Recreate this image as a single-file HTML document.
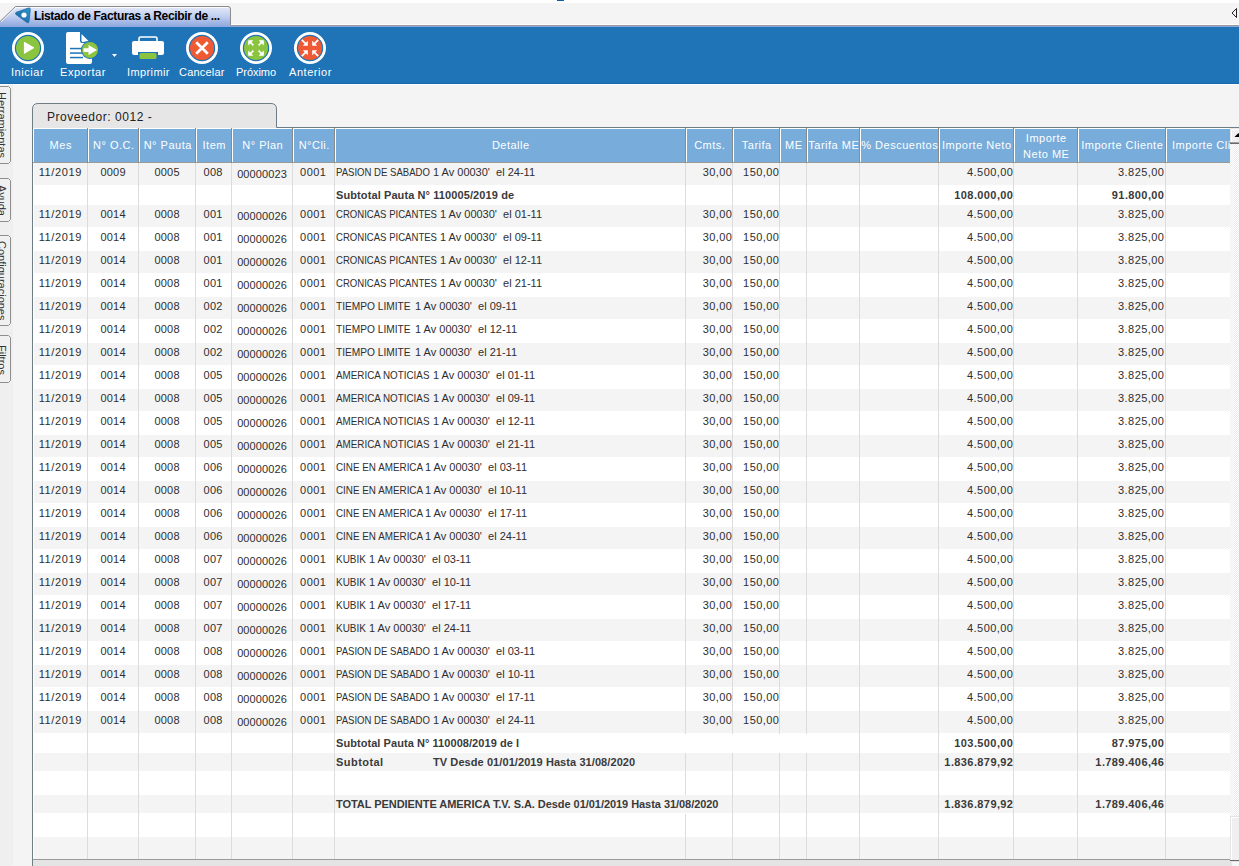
<!DOCTYPE html><html><head><meta charset="utf-8"><style>
*{margin:0;padding:0;box-sizing:border-box}
html,body{width:1239px;height:866px;overflow:hidden}
body{position:relative;background:#f4f4f4;font-family:"Liberation Sans",sans-serif;font-size:11px;color:#2e2e2e}
.a{position:absolute}
.t{position:absolute;white-space:pre;line-height:12px}
.tb{position:absolute;white-space:pre;line-height:12px;font-weight:bold;color:#3a3a3a}
.hl{position:absolute;color:#fff;white-space:pre;line-height:12px;text-align:center;letter-spacing:0.5px}
.lbl{position:absolute;color:#fff;white-space:pre;line-height:12px;font-size:11px}
</style></head><body>
<div class="a" style="left:0px;top:0px;width:1239px;height:3px;background:#ffffff;"></div>
<div class="a" style="left:557px;top:0px;width:7px;height:1px;background:#0b5bb0;"></div>
<svg class="a" style="left:0;top:0" width="1239" height="27" viewBox="0 0 1239 27">
<defs><linearGradient id="tg" x1="0" y1="0" x2="0" y2="1">
<stop offset="0" stop-color="#e3eaf8"/><stop offset="0.45" stop-color="#c3d0f0"/><stop offset="1" stop-color="#8ca6df"/></linearGradient></defs>
<rect x="0" y="24" width="1239" height="1" fill="#ffffff"/>
<rect x="0" y="25" width="1239" height="1" fill="#9a9a9a"/>
<rect x="0" y="26" width="1239" height="1" fill="#8ea7de"/>
<path d="M0 27 L0 21.5 L15.5 6.5 L228 6.5 Q230.5 6.5 230.5 9 L230.5 27 Z" fill="url(#tg)" stroke="none"/>
<path d="M0 21.5 L15.5 6.5 L228 6.5 Q230.5 6.5 230.5 9 L230.5 25" fill="none" stroke="#8c8c8c" stroke-width="1"/>
<path d="M1 22 L16 7.5 L228 7.5" fill="none" stroke="#ffffff" stroke-width="1" opacity="0.8"/>
</svg>
<svg class="a" style="left:13px;top:7px" width="20" height="18" viewBox="0 0 20 18">
<defs><linearGradient id="ig" x1="0" y1="1" x2="1" y2="0"><stop offset="0" stop-color="#1a5f9c"/><stop offset="1" stop-color="#2f97cc"/></linearGradient></defs>
<path d="M3 7.5 Q1.5 6 3.5 5.2 L15.5 1 Q17.5 0.5 17.3 2.5 L16 14.5 Q15.6 16.5 14 15.5 Z" fill="url(#ig)" stroke="#1d6aa5" stroke-width="0.8" stroke-linejoin="round"/>
<circle cx="11" cy="8" r="2.6" fill="#ffffff"/>
</svg>
<div class="tb" style="left:34px;top:10px;font-size:12px;color:#000;letter-spacing:-0.34px">Listado de Facturas a Recibir de ...</div>
<svg class="a" style="left:1229px;top:6px" width="10" height="14" viewBox="0 0 10 14">
<path d="M7.5 2.5 L3 7 L7.5 11.5 Z" fill="none" stroke="#222" stroke-width="1"/></svg>
<div class="a" style="left:0px;top:27px;width:1239px;height:56px;background:#1f73b7;"></div>
<div class="a" style="left:0px;top:83px;width:1239px;height:1px;background:#166ab0;"></div>
<div class="a" style="left:0px;top:84px;width:1239px;height:1px;background:#fbfbfb;"></div>
<svg class="a" style="left:11px;top:31px" width="34" height="34" viewBox="11 31 34 34">
<circle cx="28" cy="48" r="14.6" fill="none" stroke="#fff" stroke-width="2.8"/>
<circle cx="28" cy="48" r="12" fill="#8bc43f"/>
<path d="M24.5 42.5 L33.5 47.7 L24.5 53 Z" fill="#fff" stroke="#fff" stroke-width="1.2" stroke-linejoin="round"/>
</svg>
<svg class="a" style="left:185px;top:31px" width="34" height="34" viewBox="185 31 34 34">
<circle cx="202" cy="48" r="14.6" fill="none" stroke="#fff" stroke-width="2.8"/>
<circle cx="202" cy="48" r="12" fill="#ef5a34"/>
<path d="M196.2 42.2 L207.8 53.8 M207.8 42.2 L196.2 53.8" stroke="#fff" stroke-width="2.7" stroke-linecap="butt"/>
</svg>
<svg class="a" style="left:239px;top:31px" width="34" height="34" viewBox="239 31 34 34">
<circle cx="256" cy="48" r="14.6" fill="none" stroke="#fff" stroke-width="2.8"/>
<circle cx="256" cy="48" r="12" fill="#8bc43f"/>
<path d="M253.4 45.4 L250.2 42.2" stroke="#fff" stroke-width="1.8"/><path d="M248.2 40.2 L253.39999999999998 40.2 L248.2 45.400000000000006 Z" fill="#fff"/><path d="M258.6 45.4 L261.8 42.2" stroke="#fff" stroke-width="1.8"/><path d="M263.8 40.2 L258.6 40.2 L263.8 45.400000000000006 Z" fill="#fff"/><path d="M253.4 50.6 L250.2 53.8" stroke="#fff" stroke-width="1.8"/><path d="M248.2 55.8 L253.39999999999998 55.8 L248.2 50.599999999999994 Z" fill="#fff"/><path d="M258.6 50.6 L261.8 53.8" stroke="#fff" stroke-width="1.8"/><path d="M263.8 55.8 L258.6 55.8 L263.8 50.599999999999994 Z" fill="#fff"/>
</svg>
<svg class="a" style="left:293px;top:31px" width="34" height="34" viewBox="293 31 34 34">
<circle cx="310" cy="48" r="14.6" fill="none" stroke="#fff" stroke-width="2.8"/>
<circle cx="310" cy="48" r="12" fill="#ef5a34"/>
<path d="M301.8 39.8 L305.8 43.8" stroke="#fff" stroke-width="1.8"/><path d="M307.8 45.8 L302.8 45.8 L307.8 40.8 Z" fill="#fff"/><path d="M318.2 39.8 L314.2 43.8" stroke="#fff" stroke-width="1.8"/><path d="M312.2 45.8 L317.2 45.8 L312.2 40.8 Z" fill="#fff"/><path d="M301.8 56.2 L305.8 52.2" stroke="#fff" stroke-width="1.8"/><path d="M307.8 50.2 L302.8 50.2 L307.8 55.2 Z" fill="#fff"/><path d="M318.2 56.2 L314.2 52.2" stroke="#fff" stroke-width="1.8"/><path d="M312.2 50.2 L317.2 50.2 L312.2 55.2 Z" fill="#fff"/>
</svg>
<svg class="a" style="left:60px;top:28px" width="62" height="40" viewBox="60 28 62 40">
<path d="M68 32 L80 32 L80 41 Q80 43 82 43 L92 43 L92 62 Q92 64 90 64 L68 64 Q66 64 66 62 L66 34 Q66 32 68 32 Z" fill="#fff"/>
<path d="M81.5 34 L88.5 41 L83 42 Q81.5 42 81.5 40.5 Z" fill="#fff"/>
<rect x="70" y="47.8" width="13" height="1.5" fill="#1f73b7"/>
<rect x="70" y="52.3" width="13" height="1.5" fill="#1f73b7"/>
<rect x="70" y="56.8" width="13" height="1.5" fill="#1f73b7"/>
<circle cx="90" cy="50" r="9" fill="#1f73b7"/>
<circle cx="90" cy="50" r="8" fill="#8bc43f"/>
<path d="M83.5 48.3 L88.5 48.3 L88.5 45 L97 50 L88.5 55 L88.5 52 L83.5 52 Z" fill="#fff"/>
<path d="M112 54 L117 54 L114.5 57 Z" fill="#fff"/>
</svg>
<svg class="a" style="left:128px;top:34px" width="40" height="28" viewBox="128 34 40 28">
<path d="M139 41 L139 38.5 Q139 37 140.5 37 L155.5 37 Q157 37 157 38.5 L157 41" fill="none" stroke="#fff" stroke-width="1.6"/>
<path d="M134 41 L162 41 Q164 41 164 43 L164 53 Q164 55 162 55 L158 55 L158 52 L138 52 L138 55 L134 55 Q132 55 132 53 L132 43 Q132 41 134 41 Z" fill="#fff"/>
<path d="M141 53 L155 53 Q156.5 53 156.5 54.5 L156.5 57.5 Q156.5 59 155 59 L141 59 Q139.5 59 139.5 57.5 L139.5 54.5 Q139.5 53 141 53 Z" fill="#8bc43f"/>
</svg>
<div class="lbl" style="left:11px;top:66px;letter-spacing:0.55px">Iniciar</div>
<div class="lbl" style="left:60px;top:66px;letter-spacing:0.55px">Exportar</div>
<div class="lbl" style="left:127px;top:66px;letter-spacing:0.4px">Imprimir</div>
<div class="lbl" style="left:179px;top:66px;letter-spacing:0.2px">Cancelar</div>
<div class="lbl" style="left:236px;top:66px;letter-spacing:-0.05px">Próximo</div>
<div class="lbl" style="left:289px;top:66px;letter-spacing:0.55px">Anterior</div>
<div class="a" style="left:0px;top:85px;width:13px;height:781px;background:#efefef;"></div>
<svg class="a" style="left:0;top:86px" width="13" height="79" viewBox="0 86 13 79">
<path d="M0 86.5 L8.5 86.5 L10.5 88.5 L10.5 161.5 L8.5 163.5 L0 163.5" fill="#f0f0f0" stroke="#8e8e8e" stroke-width="1"/>
</svg>
<div class="a" style="left:-4px;top:87px;width:12px;height:77px;overflow:hidden;display:flex;align-items:center"><div style="writing-mode:vertical-rl;white-space:pre;font-size:11px;line-height:12px;color:#333">Herramientas</div></div>
<svg class="a" style="left:0;top:178px" width="13" height="45" viewBox="0 178 13 45">
<path d="M0 178.5 L8.5 178.5 L10.5 180.5 L10.5 219.5 L8.5 221.5 L0 221.5" fill="#f0f0f0" stroke="#8e8e8e" stroke-width="1"/>
</svg>
<div class="a" style="left:-4px;top:179px;width:12px;height:43px;overflow:hidden;display:flex;align-items:center"><div style="writing-mode:vertical-rl;white-space:pre;font-size:11px;line-height:12px;color:#333">Ayuda</div></div>
<svg class="a" style="left:0;top:235px" width="13" height="92" viewBox="0 235 13 92">
<path d="M0 235.5 L8.5 235.5 L10.5 237.5 L10.5 323.5 L8.5 325.5 L0 325.5" fill="#f0f0f0" stroke="#8e8e8e" stroke-width="1"/>
</svg>
<div class="a" style="left:-4px;top:236px;width:12px;height:90px;overflow:hidden;display:flex;align-items:center"><div style="writing-mode:vertical-rl;white-space:pre;font-size:11px;line-height:12px;color:#333">Configuraciones</div></div>
<svg class="a" style="left:0;top:335px" width="13" height="49" viewBox="0 335 13 49">
<path d="M0 335.5 L8.5 335.5 L10.5 337.5 L10.5 380.5 L8.5 382.5 L0 382.5" fill="#f0f0f0" stroke="#8e8e8e" stroke-width="1"/>
</svg>
<div class="a" style="left:-4px;top:336px;width:12px;height:47px;overflow:hidden;display:flex;align-items:center"><div style="writing-mode:vertical-rl;white-space:pre;font-size:11px;line-height:12px;color:#333">Filtros</div></div>
<svg class="a" style="left:0;top:96px" width="1239" height="40" viewBox="0 96 1239 40">
<path d="M32.5 136 L32.5 109 Q32.5 103.5 38 103.5 L271 103.5 Q276.5 103.5 276.5 109 L276.5 127.5 L1239 127.5" fill="#e6e6e6" stroke="#6f7d87" stroke-width="1"/>
</svg>
<div class="t" style="left:47px;top:111px;font-size:12px;color:#222;letter-spacing:0.55px">Proveedor: 0012 -</div>
<div class="a" style="left:32px;top:128px;width:1px;height:738px;background:#6f7d87;"></div>
<div class="a" style="left:33px;top:128px;width:1197px;height:1px;background:#ffffff;"></div>
<div class="a" style="left:33px;top:129px;width:1197px;height:33px;background:#78acdb;"></div>
<div class="a" style="left:33px;top:162px;width:1197px;height:1px;background:#9a9a9a;"></div>
<div class="a" style="left:33px;top:128px;width:1px;height:34px;background:#ffffff;"></div>
<div class="a" style="left:87px;top:128px;width:1px;height:35px;background:#8a8a8a;"></div>
<div class="hl" style="left:34px;top:139px;width:53.5px">Mes</div>
<div class="a" style="left:88px;top:128px;width:1px;height:34px;background:#ffffff;"></div>
<div class="a" style="left:138px;top:128px;width:1px;height:35px;background:#8a8a8a;"></div>
<div class="hl" style="left:89px;top:139px;width:49.5px">N° O.C.</div>
<div class="a" style="left:139px;top:128px;width:1px;height:34px;background:#ffffff;"></div>
<div class="a" style="left:195px;top:128px;width:1px;height:35px;background:#8a8a8a;"></div>
<div class="hl" style="left:140px;top:139px;width:55.5px">N° Pauta</div>
<div class="a" style="left:196px;top:128px;width:1px;height:34px;background:#ffffff;"></div>
<div class="a" style="left:231px;top:128px;width:1px;height:35px;background:#8a8a8a;"></div>
<div class="hl" style="left:197px;top:139px;width:34.5px">Item</div>
<div class="a" style="left:232px;top:128px;width:1px;height:34px;background:#ffffff;"></div>
<div class="a" style="left:292px;top:128px;width:1px;height:35px;background:#8a8a8a;"></div>
<div class="hl" style="left:233px;top:139px;width:59.5px">N° Plan</div>
<div class="a" style="left:293px;top:128px;width:1px;height:34px;background:#ffffff;"></div>
<div class="a" style="left:334px;top:128px;width:1px;height:35px;background:#8a8a8a;"></div>
<div class="hl" style="left:294px;top:139px;width:40.5px">N°Cli.</div>
<div class="a" style="left:335px;top:128px;width:1px;height:34px;background:#ffffff;"></div>
<div class="a" style="left:685px;top:128px;width:1px;height:35px;background:#8a8a8a;"></div>
<div class="hl" style="left:336px;top:139px;width:349.5px">Detalle</div>
<div class="a" style="left:686px;top:128px;width:1px;height:34px;background:#ffffff;"></div>
<div class="a" style="left:732px;top:128px;width:1px;height:35px;background:#8a8a8a;"></div>
<div class="hl" style="left:687px;top:139px;width:45.5px">Cmts.</div>
<div class="a" style="left:733px;top:128px;width:1px;height:34px;background:#ffffff;"></div>
<div class="a" style="left:779px;top:128px;width:1px;height:35px;background:#8a8a8a;"></div>
<div class="hl" style="left:734px;top:139px;width:45.5px">Tarifa</div>
<div class="a" style="left:780px;top:128px;width:1px;height:34px;background:#ffffff;"></div>
<div class="a" style="left:806px;top:128px;width:1px;height:35px;background:#8a8a8a;"></div>
<div class="hl" style="left:781px;top:139px;width:25.5px">ME</div>
<div class="a" style="left:807px;top:128px;width:1px;height:34px;background:#ffffff;"></div>
<div class="a" style="left:859px;top:128px;width:1px;height:35px;background:#8a8a8a;"></div>
<div class="hl" style="left:808px;top:139px;width:51.5px">Tarifa ME</div>
<div class="a" style="left:860px;top:128px;width:1px;height:34px;background:#ffffff;"></div>
<div class="a" style="left:938px;top:128px;width:1px;height:35px;background:#8a8a8a;"></div>
<div class="hl" style="left:861px;top:139px;width:77.5px">% Descuentos</div>
<div class="a" style="left:939px;top:128px;width:1px;height:34px;background:#ffffff;"></div>
<div class="a" style="left:1013px;top:128px;width:1px;height:35px;background:#8a8a8a;"></div>
<div class="hl" style="left:940px;top:139px;width:73.5px">Importe Neto</div>
<div class="a" style="left:1014px;top:128px;width:1px;height:34px;background:#ffffff;"></div>
<div class="a" style="left:1077px;top:128px;width:1px;height:35px;background:#8a8a8a;"></div>
<div class="hl" style="left:1015px;top:132px;width:62.5px">Importe</div>
<div class="hl" style="left:1015px;top:148px;width:62.5px">Neto ME</div>
<div class="a" style="left:1078px;top:128px;width:1px;height:34px;background:#ffffff;"></div>
<div class="a" style="left:1165px;top:128px;width:1px;height:35px;background:#8a8a8a;"></div>
<div class="hl" style="left:1079px;top:139px;width:86.5px">Importe Cliente</div>
<div class="a" style="left:1166px;top:128px;width:1px;height:34px;background:#ffffff;"></div>
<div class="a" style="left:1167px;top:129px;width:63px;height:33px;overflow:hidden"><div class="hl" style="left:5px;top:10px;text-align:left">Importe Cliente</div></div>
<div class="a" style="left:33px;top:163px;width:1197px;height:696px;background:#ffffff;"></div>
<div class="a" style="left:34px;top:163px;width:1196px;height:22px;background:#f4f4f4;"></div>
<div class="a" style="left:87px;top:163px;width:1px;height:23px;background:#dcdcdc;"></div>
<div class="a" style="left:138px;top:163px;width:1px;height:23px;background:#dcdcdc;"></div>
<div class="a" style="left:195px;top:163px;width:1px;height:23px;background:#dcdcdc;"></div>
<div class="a" style="left:231px;top:163px;width:1px;height:23px;background:#dcdcdc;"></div>
<div class="a" style="left:292px;top:163px;width:1px;height:23px;background:#dcdcdc;"></div>
<div class="a" style="left:334px;top:163px;width:1px;height:23px;background:#dcdcdc;"></div>
<div class="a" style="left:685px;top:163px;width:1px;height:23px;background:#dcdcdc;"></div>
<div class="a" style="left:732px;top:163px;width:1px;height:23px;background:#dcdcdc;"></div>
<div class="a" style="left:779px;top:163px;width:1px;height:23px;background:#dcdcdc;"></div>
<div class="a" style="left:806px;top:163px;width:1px;height:23px;background:#dcdcdc;"></div>
<div class="a" style="left:859px;top:163px;width:1px;height:23px;background:#dcdcdc;"></div>
<div class="a" style="left:938px;top:163px;width:1px;height:23px;background:#dcdcdc;"></div>
<div class="a" style="left:1013px;top:163px;width:1px;height:23px;background:#dcdcdc;"></div>
<div class="a" style="left:1077px;top:163px;width:1px;height:23px;background:#dcdcdc;"></div>
<div class="a" style="left:1165px;top:163px;width:1px;height:23px;background:#dcdcdc;"></div>
<div class="t" style="left:33px;top:166px;width:54.6px;text-align:center;letter-spacing:0.6px">11/2019</div>
<div class="t" style="left:88px;top:166px;width:50.2px;text-align:center;letter-spacing:0.2px">0009</div>
<div class="t" style="left:139px;top:166px;width:56.2px;text-align:center;letter-spacing:0.2px">0005</div>
<div class="t" style="left:195.5px;top:166px;width:35.2px;text-align:center;letter-spacing:0.2px">008</div>
<div class="t" style="left:232px;top:168px;width:60px;text-align:center;font-size:11px;letter-spacing:0.1px">00000023</div>
<div class="t" style="left:292.5px;top:166px;width:41.45px;text-align:center;letter-spacing:0.45px">0001</div>
<div class="t" style="left:336px;top:166px;transform:scaleX(0.8691588785046729);transform-origin:0 0">PASION DE SABADO</div>
<div class="t" style="left:433px;top:166px">1 Av 00030'  el 24-11</div>
<div class="t" style="left:686px;top:166px;width:46.45px;text-align:right;letter-spacing:0.45px">30,00</div>
<div class="t" style="left:733px;top:166px;width:46.45px;text-align:right;letter-spacing:0.45px">150,00</div>
<div class="t" style="left:939px;top:166px;width:74.45px;text-align:right;letter-spacing:0.45px">4.500,00</div>
<div class="t" style="left:1077px;top:166px;width:87.45px;text-align:right;letter-spacing:0.45px">3.825,00</div>
<div class="a" style="left:87px;top:186px;width:1px;height:19px;background:#dcdcdc;"></div>
<div class="a" style="left:138px;top:186px;width:1px;height:19px;background:#dcdcdc;"></div>
<div class="a" style="left:195px;top:186px;width:1px;height:19px;background:#dcdcdc;"></div>
<div class="a" style="left:231px;top:186px;width:1px;height:19px;background:#dcdcdc;"></div>
<div class="a" style="left:292px;top:186px;width:1px;height:19px;background:#dcdcdc;"></div>
<div class="a" style="left:334px;top:186px;width:1px;height:19px;background:#dcdcdc;"></div>
<div class="a" style="left:685px;top:186px;width:1px;height:19px;background:#dcdcdc;"></div>
<div class="a" style="left:732px;top:186px;width:1px;height:19px;background:#dcdcdc;"></div>
<div class="a" style="left:779px;top:186px;width:1px;height:19px;background:#dcdcdc;"></div>
<div class="a" style="left:806px;top:186px;width:1px;height:19px;background:#dcdcdc;"></div>
<div class="a" style="left:859px;top:186px;width:1px;height:19px;background:#dcdcdc;"></div>
<div class="a" style="left:938px;top:186px;width:1px;height:19px;background:#dcdcdc;"></div>
<div class="a" style="left:1013px;top:186px;width:1px;height:19px;background:#dcdcdc;"></div>
<div class="a" style="left:1077px;top:186px;width:1px;height:19px;background:#dcdcdc;"></div>
<div class="a" style="left:1165px;top:186px;width:1px;height:19px;background:#dcdcdc;"></div>
<div class="tb" style="left:336px;top:189px;letter-spacing:0.1px">Subtotal Pauta N° 110005/2019 de</div>
<div class="tb" style="left:939px;top:189px;width:74.4px;text-align:right;letter-spacing:0.4px">108.000,00</div>
<div class="tb" style="left:1077px;top:189px;width:87.4px;text-align:right;letter-spacing:0.4px">91.800,00</div>
<div class="a" style="left:34px;top:205px;width:1196px;height:22px;background:#f4f4f4;"></div>
<div class="a" style="left:87px;top:205px;width:1px;height:23px;background:#dcdcdc;"></div>
<div class="a" style="left:138px;top:205px;width:1px;height:23px;background:#dcdcdc;"></div>
<div class="a" style="left:195px;top:205px;width:1px;height:23px;background:#dcdcdc;"></div>
<div class="a" style="left:231px;top:205px;width:1px;height:23px;background:#dcdcdc;"></div>
<div class="a" style="left:292px;top:205px;width:1px;height:23px;background:#dcdcdc;"></div>
<div class="a" style="left:334px;top:205px;width:1px;height:23px;background:#dcdcdc;"></div>
<div class="a" style="left:685px;top:205px;width:1px;height:23px;background:#dcdcdc;"></div>
<div class="a" style="left:732px;top:205px;width:1px;height:23px;background:#dcdcdc;"></div>
<div class="a" style="left:779px;top:205px;width:1px;height:23px;background:#dcdcdc;"></div>
<div class="a" style="left:806px;top:205px;width:1px;height:23px;background:#dcdcdc;"></div>
<div class="a" style="left:859px;top:205px;width:1px;height:23px;background:#dcdcdc;"></div>
<div class="a" style="left:938px;top:205px;width:1px;height:23px;background:#dcdcdc;"></div>
<div class="a" style="left:1013px;top:205px;width:1px;height:23px;background:#dcdcdc;"></div>
<div class="a" style="left:1077px;top:205px;width:1px;height:23px;background:#dcdcdc;"></div>
<div class="a" style="left:1165px;top:205px;width:1px;height:23px;background:#dcdcdc;"></div>
<div class="t" style="left:33px;top:208px;width:54.6px;text-align:center;letter-spacing:0.6px">11/2019</div>
<div class="t" style="left:88px;top:208px;width:50.2px;text-align:center;letter-spacing:0.2px">0014</div>
<div class="t" style="left:139px;top:208px;width:56.2px;text-align:center;letter-spacing:0.2px">0008</div>
<div class="t" style="left:195.5px;top:208px;width:35.2px;text-align:center;letter-spacing:0.2px">001</div>
<div class="t" style="left:232px;top:210px;width:60px;text-align:center;font-size:11px;letter-spacing:0.1px">00000026</div>
<div class="t" style="left:292.5px;top:208px;width:41.45px;text-align:center;letter-spacing:0.45px">0001</div>
<div class="t" style="left:336px;top:208px;transform:scaleX(0.8695652173913043);transform-origin:0 0">CRONICAS PICANTES</div>
<div class="t" style="left:440px;top:208px">1 Av 00030'  el 01-11</div>
<div class="t" style="left:686px;top:208px;width:46.45px;text-align:right;letter-spacing:0.45px">30,00</div>
<div class="t" style="left:733px;top:208px;width:46.45px;text-align:right;letter-spacing:0.45px">150,00</div>
<div class="t" style="left:939px;top:208px;width:74.45px;text-align:right;letter-spacing:0.45px">4.500,00</div>
<div class="t" style="left:1077px;top:208px;width:87.45px;text-align:right;letter-spacing:0.45px">3.825,00</div>
<div class="a" style="left:87px;top:228px;width:1px;height:23px;background:#dcdcdc;"></div>
<div class="a" style="left:138px;top:228px;width:1px;height:23px;background:#dcdcdc;"></div>
<div class="a" style="left:195px;top:228px;width:1px;height:23px;background:#dcdcdc;"></div>
<div class="a" style="left:231px;top:228px;width:1px;height:23px;background:#dcdcdc;"></div>
<div class="a" style="left:292px;top:228px;width:1px;height:23px;background:#dcdcdc;"></div>
<div class="a" style="left:334px;top:228px;width:1px;height:23px;background:#dcdcdc;"></div>
<div class="a" style="left:685px;top:228px;width:1px;height:23px;background:#dcdcdc;"></div>
<div class="a" style="left:732px;top:228px;width:1px;height:23px;background:#dcdcdc;"></div>
<div class="a" style="left:779px;top:228px;width:1px;height:23px;background:#dcdcdc;"></div>
<div class="a" style="left:806px;top:228px;width:1px;height:23px;background:#dcdcdc;"></div>
<div class="a" style="left:859px;top:228px;width:1px;height:23px;background:#dcdcdc;"></div>
<div class="a" style="left:938px;top:228px;width:1px;height:23px;background:#dcdcdc;"></div>
<div class="a" style="left:1013px;top:228px;width:1px;height:23px;background:#dcdcdc;"></div>
<div class="a" style="left:1077px;top:228px;width:1px;height:23px;background:#dcdcdc;"></div>
<div class="a" style="left:1165px;top:228px;width:1px;height:23px;background:#dcdcdc;"></div>
<div class="t" style="left:33px;top:231px;width:54.6px;text-align:center;letter-spacing:0.6px">11/2019</div>
<div class="t" style="left:88px;top:231px;width:50.2px;text-align:center;letter-spacing:0.2px">0014</div>
<div class="t" style="left:139px;top:231px;width:56.2px;text-align:center;letter-spacing:0.2px">0008</div>
<div class="t" style="left:195.5px;top:231px;width:35.2px;text-align:center;letter-spacing:0.2px">001</div>
<div class="t" style="left:232px;top:233px;width:60px;text-align:center;font-size:11px;letter-spacing:0.1px">00000026</div>
<div class="t" style="left:292.5px;top:231px;width:41.45px;text-align:center;letter-spacing:0.45px">0001</div>
<div class="t" style="left:336px;top:231px;transform:scaleX(0.8695652173913043);transform-origin:0 0">CRONICAS PICANTES</div>
<div class="t" style="left:440px;top:231px">1 Av 00030'  el 09-11</div>
<div class="t" style="left:686px;top:231px;width:46.45px;text-align:right;letter-spacing:0.45px">30,00</div>
<div class="t" style="left:733px;top:231px;width:46.45px;text-align:right;letter-spacing:0.45px">150,00</div>
<div class="t" style="left:939px;top:231px;width:74.45px;text-align:right;letter-spacing:0.45px">4.500,00</div>
<div class="t" style="left:1077px;top:231px;width:87.45px;text-align:right;letter-spacing:0.45px">3.825,00</div>
<div class="a" style="left:34px;top:251px;width:1196px;height:22px;background:#f4f4f4;"></div>
<div class="a" style="left:87px;top:251px;width:1px;height:23px;background:#dcdcdc;"></div>
<div class="a" style="left:138px;top:251px;width:1px;height:23px;background:#dcdcdc;"></div>
<div class="a" style="left:195px;top:251px;width:1px;height:23px;background:#dcdcdc;"></div>
<div class="a" style="left:231px;top:251px;width:1px;height:23px;background:#dcdcdc;"></div>
<div class="a" style="left:292px;top:251px;width:1px;height:23px;background:#dcdcdc;"></div>
<div class="a" style="left:334px;top:251px;width:1px;height:23px;background:#dcdcdc;"></div>
<div class="a" style="left:685px;top:251px;width:1px;height:23px;background:#dcdcdc;"></div>
<div class="a" style="left:732px;top:251px;width:1px;height:23px;background:#dcdcdc;"></div>
<div class="a" style="left:779px;top:251px;width:1px;height:23px;background:#dcdcdc;"></div>
<div class="a" style="left:806px;top:251px;width:1px;height:23px;background:#dcdcdc;"></div>
<div class="a" style="left:859px;top:251px;width:1px;height:23px;background:#dcdcdc;"></div>
<div class="a" style="left:938px;top:251px;width:1px;height:23px;background:#dcdcdc;"></div>
<div class="a" style="left:1013px;top:251px;width:1px;height:23px;background:#dcdcdc;"></div>
<div class="a" style="left:1077px;top:251px;width:1px;height:23px;background:#dcdcdc;"></div>
<div class="a" style="left:1165px;top:251px;width:1px;height:23px;background:#dcdcdc;"></div>
<div class="t" style="left:33px;top:254px;width:54.6px;text-align:center;letter-spacing:0.6px">11/2019</div>
<div class="t" style="left:88px;top:254px;width:50.2px;text-align:center;letter-spacing:0.2px">0014</div>
<div class="t" style="left:139px;top:254px;width:56.2px;text-align:center;letter-spacing:0.2px">0008</div>
<div class="t" style="left:195.5px;top:254px;width:35.2px;text-align:center;letter-spacing:0.2px">001</div>
<div class="t" style="left:232px;top:256px;width:60px;text-align:center;font-size:11px;letter-spacing:0.1px">00000026</div>
<div class="t" style="left:292.5px;top:254px;width:41.45px;text-align:center;letter-spacing:0.45px">0001</div>
<div class="t" style="left:336px;top:254px;transform:scaleX(0.8695652173913043);transform-origin:0 0">CRONICAS PICANTES</div>
<div class="t" style="left:440px;top:254px">1 Av 00030'  el 12-11</div>
<div class="t" style="left:686px;top:254px;width:46.45px;text-align:right;letter-spacing:0.45px">30,00</div>
<div class="t" style="left:733px;top:254px;width:46.45px;text-align:right;letter-spacing:0.45px">150,00</div>
<div class="t" style="left:939px;top:254px;width:74.45px;text-align:right;letter-spacing:0.45px">4.500,00</div>
<div class="t" style="left:1077px;top:254px;width:87.45px;text-align:right;letter-spacing:0.45px">3.825,00</div>
<div class="a" style="left:87px;top:274px;width:1px;height:23px;background:#dcdcdc;"></div>
<div class="a" style="left:138px;top:274px;width:1px;height:23px;background:#dcdcdc;"></div>
<div class="a" style="left:195px;top:274px;width:1px;height:23px;background:#dcdcdc;"></div>
<div class="a" style="left:231px;top:274px;width:1px;height:23px;background:#dcdcdc;"></div>
<div class="a" style="left:292px;top:274px;width:1px;height:23px;background:#dcdcdc;"></div>
<div class="a" style="left:334px;top:274px;width:1px;height:23px;background:#dcdcdc;"></div>
<div class="a" style="left:685px;top:274px;width:1px;height:23px;background:#dcdcdc;"></div>
<div class="a" style="left:732px;top:274px;width:1px;height:23px;background:#dcdcdc;"></div>
<div class="a" style="left:779px;top:274px;width:1px;height:23px;background:#dcdcdc;"></div>
<div class="a" style="left:806px;top:274px;width:1px;height:23px;background:#dcdcdc;"></div>
<div class="a" style="left:859px;top:274px;width:1px;height:23px;background:#dcdcdc;"></div>
<div class="a" style="left:938px;top:274px;width:1px;height:23px;background:#dcdcdc;"></div>
<div class="a" style="left:1013px;top:274px;width:1px;height:23px;background:#dcdcdc;"></div>
<div class="a" style="left:1077px;top:274px;width:1px;height:23px;background:#dcdcdc;"></div>
<div class="a" style="left:1165px;top:274px;width:1px;height:23px;background:#dcdcdc;"></div>
<div class="t" style="left:33px;top:277px;width:54.6px;text-align:center;letter-spacing:0.6px">11/2019</div>
<div class="t" style="left:88px;top:277px;width:50.2px;text-align:center;letter-spacing:0.2px">0014</div>
<div class="t" style="left:139px;top:277px;width:56.2px;text-align:center;letter-spacing:0.2px">0008</div>
<div class="t" style="left:195.5px;top:277px;width:35.2px;text-align:center;letter-spacing:0.2px">001</div>
<div class="t" style="left:232px;top:279px;width:60px;text-align:center;font-size:11px;letter-spacing:0.1px">00000026</div>
<div class="t" style="left:292.5px;top:277px;width:41.45px;text-align:center;letter-spacing:0.45px">0001</div>
<div class="t" style="left:336px;top:277px;transform:scaleX(0.8695652173913043);transform-origin:0 0">CRONICAS PICANTES</div>
<div class="t" style="left:440px;top:277px">1 Av 00030'  el 21-11</div>
<div class="t" style="left:686px;top:277px;width:46.45px;text-align:right;letter-spacing:0.45px">30,00</div>
<div class="t" style="left:733px;top:277px;width:46.45px;text-align:right;letter-spacing:0.45px">150,00</div>
<div class="t" style="left:939px;top:277px;width:74.45px;text-align:right;letter-spacing:0.45px">4.500,00</div>
<div class="t" style="left:1077px;top:277px;width:87.45px;text-align:right;letter-spacing:0.45px">3.825,00</div>
<div class="a" style="left:34px;top:297px;width:1196px;height:22px;background:#f4f4f4;"></div>
<div class="a" style="left:87px;top:297px;width:1px;height:23px;background:#dcdcdc;"></div>
<div class="a" style="left:138px;top:297px;width:1px;height:23px;background:#dcdcdc;"></div>
<div class="a" style="left:195px;top:297px;width:1px;height:23px;background:#dcdcdc;"></div>
<div class="a" style="left:231px;top:297px;width:1px;height:23px;background:#dcdcdc;"></div>
<div class="a" style="left:292px;top:297px;width:1px;height:23px;background:#dcdcdc;"></div>
<div class="a" style="left:334px;top:297px;width:1px;height:23px;background:#dcdcdc;"></div>
<div class="a" style="left:685px;top:297px;width:1px;height:23px;background:#dcdcdc;"></div>
<div class="a" style="left:732px;top:297px;width:1px;height:23px;background:#dcdcdc;"></div>
<div class="a" style="left:779px;top:297px;width:1px;height:23px;background:#dcdcdc;"></div>
<div class="a" style="left:806px;top:297px;width:1px;height:23px;background:#dcdcdc;"></div>
<div class="a" style="left:859px;top:297px;width:1px;height:23px;background:#dcdcdc;"></div>
<div class="a" style="left:938px;top:297px;width:1px;height:23px;background:#dcdcdc;"></div>
<div class="a" style="left:1013px;top:297px;width:1px;height:23px;background:#dcdcdc;"></div>
<div class="a" style="left:1077px;top:297px;width:1px;height:23px;background:#dcdcdc;"></div>
<div class="a" style="left:1165px;top:297px;width:1px;height:23px;background:#dcdcdc;"></div>
<div class="t" style="left:33px;top:300px;width:54.6px;text-align:center;letter-spacing:0.6px">11/2019</div>
<div class="t" style="left:88px;top:300px;width:50.2px;text-align:center;letter-spacing:0.2px">0014</div>
<div class="t" style="left:139px;top:300px;width:56.2px;text-align:center;letter-spacing:0.2px">0008</div>
<div class="t" style="left:195.5px;top:300px;width:35.2px;text-align:center;letter-spacing:0.2px">002</div>
<div class="t" style="left:232px;top:302px;width:60px;text-align:center;font-size:11px;letter-spacing:0.1px">00000026</div>
<div class="t" style="left:292.5px;top:300px;width:41.45px;text-align:center;letter-spacing:0.45px">0001</div>
<div class="t" style="left:336px;top:300px;transform:scaleX(0.925);transform-origin:0 0">TIEMPO LIMITE</div>
<div class="t" style="left:415px;top:300px">1 Av 00030'  el 09-11</div>
<div class="t" style="left:686px;top:300px;width:46.45px;text-align:right;letter-spacing:0.45px">30,00</div>
<div class="t" style="left:733px;top:300px;width:46.45px;text-align:right;letter-spacing:0.45px">150,00</div>
<div class="t" style="left:939px;top:300px;width:74.45px;text-align:right;letter-spacing:0.45px">4.500,00</div>
<div class="t" style="left:1077px;top:300px;width:87.45px;text-align:right;letter-spacing:0.45px">3.825,00</div>
<div class="a" style="left:87px;top:320px;width:1px;height:23px;background:#dcdcdc;"></div>
<div class="a" style="left:138px;top:320px;width:1px;height:23px;background:#dcdcdc;"></div>
<div class="a" style="left:195px;top:320px;width:1px;height:23px;background:#dcdcdc;"></div>
<div class="a" style="left:231px;top:320px;width:1px;height:23px;background:#dcdcdc;"></div>
<div class="a" style="left:292px;top:320px;width:1px;height:23px;background:#dcdcdc;"></div>
<div class="a" style="left:334px;top:320px;width:1px;height:23px;background:#dcdcdc;"></div>
<div class="a" style="left:685px;top:320px;width:1px;height:23px;background:#dcdcdc;"></div>
<div class="a" style="left:732px;top:320px;width:1px;height:23px;background:#dcdcdc;"></div>
<div class="a" style="left:779px;top:320px;width:1px;height:23px;background:#dcdcdc;"></div>
<div class="a" style="left:806px;top:320px;width:1px;height:23px;background:#dcdcdc;"></div>
<div class="a" style="left:859px;top:320px;width:1px;height:23px;background:#dcdcdc;"></div>
<div class="a" style="left:938px;top:320px;width:1px;height:23px;background:#dcdcdc;"></div>
<div class="a" style="left:1013px;top:320px;width:1px;height:23px;background:#dcdcdc;"></div>
<div class="a" style="left:1077px;top:320px;width:1px;height:23px;background:#dcdcdc;"></div>
<div class="a" style="left:1165px;top:320px;width:1px;height:23px;background:#dcdcdc;"></div>
<div class="t" style="left:33px;top:323px;width:54.6px;text-align:center;letter-spacing:0.6px">11/2019</div>
<div class="t" style="left:88px;top:323px;width:50.2px;text-align:center;letter-spacing:0.2px">0014</div>
<div class="t" style="left:139px;top:323px;width:56.2px;text-align:center;letter-spacing:0.2px">0008</div>
<div class="t" style="left:195.5px;top:323px;width:35.2px;text-align:center;letter-spacing:0.2px">002</div>
<div class="t" style="left:232px;top:325px;width:60px;text-align:center;font-size:11px;letter-spacing:0.1px">00000026</div>
<div class="t" style="left:292.5px;top:323px;width:41.45px;text-align:center;letter-spacing:0.45px">0001</div>
<div class="t" style="left:336px;top:323px;transform:scaleX(0.925);transform-origin:0 0">TIEMPO LIMITE</div>
<div class="t" style="left:415px;top:323px">1 Av 00030'  el 12-11</div>
<div class="t" style="left:686px;top:323px;width:46.45px;text-align:right;letter-spacing:0.45px">30,00</div>
<div class="t" style="left:733px;top:323px;width:46.45px;text-align:right;letter-spacing:0.45px">150,00</div>
<div class="t" style="left:939px;top:323px;width:74.45px;text-align:right;letter-spacing:0.45px">4.500,00</div>
<div class="t" style="left:1077px;top:323px;width:87.45px;text-align:right;letter-spacing:0.45px">3.825,00</div>
<div class="a" style="left:34px;top:343px;width:1196px;height:22px;background:#f4f4f4;"></div>
<div class="a" style="left:87px;top:343px;width:1px;height:23px;background:#dcdcdc;"></div>
<div class="a" style="left:138px;top:343px;width:1px;height:23px;background:#dcdcdc;"></div>
<div class="a" style="left:195px;top:343px;width:1px;height:23px;background:#dcdcdc;"></div>
<div class="a" style="left:231px;top:343px;width:1px;height:23px;background:#dcdcdc;"></div>
<div class="a" style="left:292px;top:343px;width:1px;height:23px;background:#dcdcdc;"></div>
<div class="a" style="left:334px;top:343px;width:1px;height:23px;background:#dcdcdc;"></div>
<div class="a" style="left:685px;top:343px;width:1px;height:23px;background:#dcdcdc;"></div>
<div class="a" style="left:732px;top:343px;width:1px;height:23px;background:#dcdcdc;"></div>
<div class="a" style="left:779px;top:343px;width:1px;height:23px;background:#dcdcdc;"></div>
<div class="a" style="left:806px;top:343px;width:1px;height:23px;background:#dcdcdc;"></div>
<div class="a" style="left:859px;top:343px;width:1px;height:23px;background:#dcdcdc;"></div>
<div class="a" style="left:938px;top:343px;width:1px;height:23px;background:#dcdcdc;"></div>
<div class="a" style="left:1013px;top:343px;width:1px;height:23px;background:#dcdcdc;"></div>
<div class="a" style="left:1077px;top:343px;width:1px;height:23px;background:#dcdcdc;"></div>
<div class="a" style="left:1165px;top:343px;width:1px;height:23px;background:#dcdcdc;"></div>
<div class="t" style="left:33px;top:346px;width:54.6px;text-align:center;letter-spacing:0.6px">11/2019</div>
<div class="t" style="left:88px;top:346px;width:50.2px;text-align:center;letter-spacing:0.2px">0014</div>
<div class="t" style="left:139px;top:346px;width:56.2px;text-align:center;letter-spacing:0.2px">0008</div>
<div class="t" style="left:195.5px;top:346px;width:35.2px;text-align:center;letter-spacing:0.2px">002</div>
<div class="t" style="left:232px;top:348px;width:60px;text-align:center;font-size:11px;letter-spacing:0.1px">00000026</div>
<div class="t" style="left:292.5px;top:346px;width:41.45px;text-align:center;letter-spacing:0.45px">0001</div>
<div class="t" style="left:336px;top:346px;transform:scaleX(0.925);transform-origin:0 0">TIEMPO LIMITE</div>
<div class="t" style="left:415px;top:346px">1 Av 00030'  el 21-11</div>
<div class="t" style="left:686px;top:346px;width:46.45px;text-align:right;letter-spacing:0.45px">30,00</div>
<div class="t" style="left:733px;top:346px;width:46.45px;text-align:right;letter-spacing:0.45px">150,00</div>
<div class="t" style="left:939px;top:346px;width:74.45px;text-align:right;letter-spacing:0.45px">4.500,00</div>
<div class="t" style="left:1077px;top:346px;width:87.45px;text-align:right;letter-spacing:0.45px">3.825,00</div>
<div class="a" style="left:87px;top:366px;width:1px;height:23px;background:#dcdcdc;"></div>
<div class="a" style="left:138px;top:366px;width:1px;height:23px;background:#dcdcdc;"></div>
<div class="a" style="left:195px;top:366px;width:1px;height:23px;background:#dcdcdc;"></div>
<div class="a" style="left:231px;top:366px;width:1px;height:23px;background:#dcdcdc;"></div>
<div class="a" style="left:292px;top:366px;width:1px;height:23px;background:#dcdcdc;"></div>
<div class="a" style="left:334px;top:366px;width:1px;height:23px;background:#dcdcdc;"></div>
<div class="a" style="left:685px;top:366px;width:1px;height:23px;background:#dcdcdc;"></div>
<div class="a" style="left:732px;top:366px;width:1px;height:23px;background:#dcdcdc;"></div>
<div class="a" style="left:779px;top:366px;width:1px;height:23px;background:#dcdcdc;"></div>
<div class="a" style="left:806px;top:366px;width:1px;height:23px;background:#dcdcdc;"></div>
<div class="a" style="left:859px;top:366px;width:1px;height:23px;background:#dcdcdc;"></div>
<div class="a" style="left:938px;top:366px;width:1px;height:23px;background:#dcdcdc;"></div>
<div class="a" style="left:1013px;top:366px;width:1px;height:23px;background:#dcdcdc;"></div>
<div class="a" style="left:1077px;top:366px;width:1px;height:23px;background:#dcdcdc;"></div>
<div class="a" style="left:1165px;top:366px;width:1px;height:23px;background:#dcdcdc;"></div>
<div class="t" style="left:33px;top:369px;width:54.6px;text-align:center;letter-spacing:0.6px">11/2019</div>
<div class="t" style="left:88px;top:369px;width:50.2px;text-align:center;letter-spacing:0.2px">0014</div>
<div class="t" style="left:139px;top:369px;width:56.2px;text-align:center;letter-spacing:0.2px">0008</div>
<div class="t" style="left:195.5px;top:369px;width:35.2px;text-align:center;letter-spacing:0.2px">005</div>
<div class="t" style="left:232px;top:371px;width:60px;text-align:center;font-size:11px;letter-spacing:0.1px">00000026</div>
<div class="t" style="left:292.5px;top:369px;width:41.45px;text-align:center;letter-spacing:0.45px">0001</div>
<div class="t" style="left:336px;top:369px;transform:scaleX(0.8942307692307693);transform-origin:0 0">AMERICA NOTICIAS</div>
<div class="t" style="left:433px;top:369px">1 Av 00030'  el 01-11</div>
<div class="t" style="left:686px;top:369px;width:46.45px;text-align:right;letter-spacing:0.45px">30,00</div>
<div class="t" style="left:733px;top:369px;width:46.45px;text-align:right;letter-spacing:0.45px">150,00</div>
<div class="t" style="left:939px;top:369px;width:74.45px;text-align:right;letter-spacing:0.45px">4.500,00</div>
<div class="t" style="left:1077px;top:369px;width:87.45px;text-align:right;letter-spacing:0.45px">3.825,00</div>
<div class="a" style="left:34px;top:389px;width:1196px;height:22px;background:#f4f4f4;"></div>
<div class="a" style="left:87px;top:389px;width:1px;height:23px;background:#dcdcdc;"></div>
<div class="a" style="left:138px;top:389px;width:1px;height:23px;background:#dcdcdc;"></div>
<div class="a" style="left:195px;top:389px;width:1px;height:23px;background:#dcdcdc;"></div>
<div class="a" style="left:231px;top:389px;width:1px;height:23px;background:#dcdcdc;"></div>
<div class="a" style="left:292px;top:389px;width:1px;height:23px;background:#dcdcdc;"></div>
<div class="a" style="left:334px;top:389px;width:1px;height:23px;background:#dcdcdc;"></div>
<div class="a" style="left:685px;top:389px;width:1px;height:23px;background:#dcdcdc;"></div>
<div class="a" style="left:732px;top:389px;width:1px;height:23px;background:#dcdcdc;"></div>
<div class="a" style="left:779px;top:389px;width:1px;height:23px;background:#dcdcdc;"></div>
<div class="a" style="left:806px;top:389px;width:1px;height:23px;background:#dcdcdc;"></div>
<div class="a" style="left:859px;top:389px;width:1px;height:23px;background:#dcdcdc;"></div>
<div class="a" style="left:938px;top:389px;width:1px;height:23px;background:#dcdcdc;"></div>
<div class="a" style="left:1013px;top:389px;width:1px;height:23px;background:#dcdcdc;"></div>
<div class="a" style="left:1077px;top:389px;width:1px;height:23px;background:#dcdcdc;"></div>
<div class="a" style="left:1165px;top:389px;width:1px;height:23px;background:#dcdcdc;"></div>
<div class="t" style="left:33px;top:392px;width:54.6px;text-align:center;letter-spacing:0.6px">11/2019</div>
<div class="t" style="left:88px;top:392px;width:50.2px;text-align:center;letter-spacing:0.2px">0014</div>
<div class="t" style="left:139px;top:392px;width:56.2px;text-align:center;letter-spacing:0.2px">0008</div>
<div class="t" style="left:195.5px;top:392px;width:35.2px;text-align:center;letter-spacing:0.2px">005</div>
<div class="t" style="left:232px;top:394px;width:60px;text-align:center;font-size:11px;letter-spacing:0.1px">00000026</div>
<div class="t" style="left:292.5px;top:392px;width:41.45px;text-align:center;letter-spacing:0.45px">0001</div>
<div class="t" style="left:336px;top:392px;transform:scaleX(0.8942307692307693);transform-origin:0 0">AMERICA NOTICIAS</div>
<div class="t" style="left:433px;top:392px">1 Av 00030'  el 09-11</div>
<div class="t" style="left:686px;top:392px;width:46.45px;text-align:right;letter-spacing:0.45px">30,00</div>
<div class="t" style="left:733px;top:392px;width:46.45px;text-align:right;letter-spacing:0.45px">150,00</div>
<div class="t" style="left:939px;top:392px;width:74.45px;text-align:right;letter-spacing:0.45px">4.500,00</div>
<div class="t" style="left:1077px;top:392px;width:87.45px;text-align:right;letter-spacing:0.45px">3.825,00</div>
<div class="a" style="left:87px;top:412px;width:1px;height:23px;background:#dcdcdc;"></div>
<div class="a" style="left:138px;top:412px;width:1px;height:23px;background:#dcdcdc;"></div>
<div class="a" style="left:195px;top:412px;width:1px;height:23px;background:#dcdcdc;"></div>
<div class="a" style="left:231px;top:412px;width:1px;height:23px;background:#dcdcdc;"></div>
<div class="a" style="left:292px;top:412px;width:1px;height:23px;background:#dcdcdc;"></div>
<div class="a" style="left:334px;top:412px;width:1px;height:23px;background:#dcdcdc;"></div>
<div class="a" style="left:685px;top:412px;width:1px;height:23px;background:#dcdcdc;"></div>
<div class="a" style="left:732px;top:412px;width:1px;height:23px;background:#dcdcdc;"></div>
<div class="a" style="left:779px;top:412px;width:1px;height:23px;background:#dcdcdc;"></div>
<div class="a" style="left:806px;top:412px;width:1px;height:23px;background:#dcdcdc;"></div>
<div class="a" style="left:859px;top:412px;width:1px;height:23px;background:#dcdcdc;"></div>
<div class="a" style="left:938px;top:412px;width:1px;height:23px;background:#dcdcdc;"></div>
<div class="a" style="left:1013px;top:412px;width:1px;height:23px;background:#dcdcdc;"></div>
<div class="a" style="left:1077px;top:412px;width:1px;height:23px;background:#dcdcdc;"></div>
<div class="a" style="left:1165px;top:412px;width:1px;height:23px;background:#dcdcdc;"></div>
<div class="t" style="left:33px;top:415px;width:54.6px;text-align:center;letter-spacing:0.6px">11/2019</div>
<div class="t" style="left:88px;top:415px;width:50.2px;text-align:center;letter-spacing:0.2px">0014</div>
<div class="t" style="left:139px;top:415px;width:56.2px;text-align:center;letter-spacing:0.2px">0008</div>
<div class="t" style="left:195.5px;top:415px;width:35.2px;text-align:center;letter-spacing:0.2px">005</div>
<div class="t" style="left:232px;top:417px;width:60px;text-align:center;font-size:11px;letter-spacing:0.1px">00000026</div>
<div class="t" style="left:292.5px;top:415px;width:41.45px;text-align:center;letter-spacing:0.45px">0001</div>
<div class="t" style="left:336px;top:415px;transform:scaleX(0.8942307692307693);transform-origin:0 0">AMERICA NOTICIAS</div>
<div class="t" style="left:433px;top:415px">1 Av 00030'  el 12-11</div>
<div class="t" style="left:686px;top:415px;width:46.45px;text-align:right;letter-spacing:0.45px">30,00</div>
<div class="t" style="left:733px;top:415px;width:46.45px;text-align:right;letter-spacing:0.45px">150,00</div>
<div class="t" style="left:939px;top:415px;width:74.45px;text-align:right;letter-spacing:0.45px">4.500,00</div>
<div class="t" style="left:1077px;top:415px;width:87.45px;text-align:right;letter-spacing:0.45px">3.825,00</div>
<div class="a" style="left:34px;top:435px;width:1196px;height:22px;background:#f4f4f4;"></div>
<div class="a" style="left:87px;top:435px;width:1px;height:23px;background:#dcdcdc;"></div>
<div class="a" style="left:138px;top:435px;width:1px;height:23px;background:#dcdcdc;"></div>
<div class="a" style="left:195px;top:435px;width:1px;height:23px;background:#dcdcdc;"></div>
<div class="a" style="left:231px;top:435px;width:1px;height:23px;background:#dcdcdc;"></div>
<div class="a" style="left:292px;top:435px;width:1px;height:23px;background:#dcdcdc;"></div>
<div class="a" style="left:334px;top:435px;width:1px;height:23px;background:#dcdcdc;"></div>
<div class="a" style="left:685px;top:435px;width:1px;height:23px;background:#dcdcdc;"></div>
<div class="a" style="left:732px;top:435px;width:1px;height:23px;background:#dcdcdc;"></div>
<div class="a" style="left:779px;top:435px;width:1px;height:23px;background:#dcdcdc;"></div>
<div class="a" style="left:806px;top:435px;width:1px;height:23px;background:#dcdcdc;"></div>
<div class="a" style="left:859px;top:435px;width:1px;height:23px;background:#dcdcdc;"></div>
<div class="a" style="left:938px;top:435px;width:1px;height:23px;background:#dcdcdc;"></div>
<div class="a" style="left:1013px;top:435px;width:1px;height:23px;background:#dcdcdc;"></div>
<div class="a" style="left:1077px;top:435px;width:1px;height:23px;background:#dcdcdc;"></div>
<div class="a" style="left:1165px;top:435px;width:1px;height:23px;background:#dcdcdc;"></div>
<div class="t" style="left:33px;top:438px;width:54.6px;text-align:center;letter-spacing:0.6px">11/2019</div>
<div class="t" style="left:88px;top:438px;width:50.2px;text-align:center;letter-spacing:0.2px">0014</div>
<div class="t" style="left:139px;top:438px;width:56.2px;text-align:center;letter-spacing:0.2px">0008</div>
<div class="t" style="left:195.5px;top:438px;width:35.2px;text-align:center;letter-spacing:0.2px">005</div>
<div class="t" style="left:232px;top:440px;width:60px;text-align:center;font-size:11px;letter-spacing:0.1px">00000026</div>
<div class="t" style="left:292.5px;top:438px;width:41.45px;text-align:center;letter-spacing:0.45px">0001</div>
<div class="t" style="left:336px;top:438px;transform:scaleX(0.8942307692307693);transform-origin:0 0">AMERICA NOTICIAS</div>
<div class="t" style="left:433px;top:438px">1 Av 00030'  el 21-11</div>
<div class="t" style="left:686px;top:438px;width:46.45px;text-align:right;letter-spacing:0.45px">30,00</div>
<div class="t" style="left:733px;top:438px;width:46.45px;text-align:right;letter-spacing:0.45px">150,00</div>
<div class="t" style="left:939px;top:438px;width:74.45px;text-align:right;letter-spacing:0.45px">4.500,00</div>
<div class="t" style="left:1077px;top:438px;width:87.45px;text-align:right;letter-spacing:0.45px">3.825,00</div>
<div class="a" style="left:87px;top:458px;width:1px;height:23px;background:#dcdcdc;"></div>
<div class="a" style="left:138px;top:458px;width:1px;height:23px;background:#dcdcdc;"></div>
<div class="a" style="left:195px;top:458px;width:1px;height:23px;background:#dcdcdc;"></div>
<div class="a" style="left:231px;top:458px;width:1px;height:23px;background:#dcdcdc;"></div>
<div class="a" style="left:292px;top:458px;width:1px;height:23px;background:#dcdcdc;"></div>
<div class="a" style="left:334px;top:458px;width:1px;height:23px;background:#dcdcdc;"></div>
<div class="a" style="left:685px;top:458px;width:1px;height:23px;background:#dcdcdc;"></div>
<div class="a" style="left:732px;top:458px;width:1px;height:23px;background:#dcdcdc;"></div>
<div class="a" style="left:779px;top:458px;width:1px;height:23px;background:#dcdcdc;"></div>
<div class="a" style="left:806px;top:458px;width:1px;height:23px;background:#dcdcdc;"></div>
<div class="a" style="left:859px;top:458px;width:1px;height:23px;background:#dcdcdc;"></div>
<div class="a" style="left:938px;top:458px;width:1px;height:23px;background:#dcdcdc;"></div>
<div class="a" style="left:1013px;top:458px;width:1px;height:23px;background:#dcdcdc;"></div>
<div class="a" style="left:1077px;top:458px;width:1px;height:23px;background:#dcdcdc;"></div>
<div class="a" style="left:1165px;top:458px;width:1px;height:23px;background:#dcdcdc;"></div>
<div class="t" style="left:33px;top:461px;width:54.6px;text-align:center;letter-spacing:0.6px">11/2019</div>
<div class="t" style="left:88px;top:461px;width:50.2px;text-align:center;letter-spacing:0.2px">0014</div>
<div class="t" style="left:139px;top:461px;width:56.2px;text-align:center;letter-spacing:0.2px">0008</div>
<div class="t" style="left:195.5px;top:461px;width:35.2px;text-align:center;letter-spacing:0.2px">006</div>
<div class="t" style="left:232px;top:463px;width:60px;text-align:center;font-size:11px;letter-spacing:0.1px">00000026</div>
<div class="t" style="left:292.5px;top:461px;width:41.45px;text-align:center;letter-spacing:0.45px">0001</div>
<div class="t" style="left:336px;top:461px;transform:scaleX(0.8958333333333334);transform-origin:0 0">CINE EN AMERICA</div>
<div class="t" style="left:425px;top:461px">1 Av 00030'  el 03-11</div>
<div class="t" style="left:686px;top:461px;width:46.45px;text-align:right;letter-spacing:0.45px">30,00</div>
<div class="t" style="left:733px;top:461px;width:46.45px;text-align:right;letter-spacing:0.45px">150,00</div>
<div class="t" style="left:939px;top:461px;width:74.45px;text-align:right;letter-spacing:0.45px">4.500,00</div>
<div class="t" style="left:1077px;top:461px;width:87.45px;text-align:right;letter-spacing:0.45px">3.825,00</div>
<div class="a" style="left:34px;top:481px;width:1196px;height:22px;background:#f4f4f4;"></div>
<div class="a" style="left:87px;top:481px;width:1px;height:23px;background:#dcdcdc;"></div>
<div class="a" style="left:138px;top:481px;width:1px;height:23px;background:#dcdcdc;"></div>
<div class="a" style="left:195px;top:481px;width:1px;height:23px;background:#dcdcdc;"></div>
<div class="a" style="left:231px;top:481px;width:1px;height:23px;background:#dcdcdc;"></div>
<div class="a" style="left:292px;top:481px;width:1px;height:23px;background:#dcdcdc;"></div>
<div class="a" style="left:334px;top:481px;width:1px;height:23px;background:#dcdcdc;"></div>
<div class="a" style="left:685px;top:481px;width:1px;height:23px;background:#dcdcdc;"></div>
<div class="a" style="left:732px;top:481px;width:1px;height:23px;background:#dcdcdc;"></div>
<div class="a" style="left:779px;top:481px;width:1px;height:23px;background:#dcdcdc;"></div>
<div class="a" style="left:806px;top:481px;width:1px;height:23px;background:#dcdcdc;"></div>
<div class="a" style="left:859px;top:481px;width:1px;height:23px;background:#dcdcdc;"></div>
<div class="a" style="left:938px;top:481px;width:1px;height:23px;background:#dcdcdc;"></div>
<div class="a" style="left:1013px;top:481px;width:1px;height:23px;background:#dcdcdc;"></div>
<div class="a" style="left:1077px;top:481px;width:1px;height:23px;background:#dcdcdc;"></div>
<div class="a" style="left:1165px;top:481px;width:1px;height:23px;background:#dcdcdc;"></div>
<div class="t" style="left:33px;top:484px;width:54.6px;text-align:center;letter-spacing:0.6px">11/2019</div>
<div class="t" style="left:88px;top:484px;width:50.2px;text-align:center;letter-spacing:0.2px">0014</div>
<div class="t" style="left:139px;top:484px;width:56.2px;text-align:center;letter-spacing:0.2px">0008</div>
<div class="t" style="left:195.5px;top:484px;width:35.2px;text-align:center;letter-spacing:0.2px">006</div>
<div class="t" style="left:232px;top:486px;width:60px;text-align:center;font-size:11px;letter-spacing:0.1px">00000026</div>
<div class="t" style="left:292.5px;top:484px;width:41.45px;text-align:center;letter-spacing:0.45px">0001</div>
<div class="t" style="left:336px;top:484px;transform:scaleX(0.8958333333333334);transform-origin:0 0">CINE EN AMERICA</div>
<div class="t" style="left:425px;top:484px">1 Av 00030'  el 10-11</div>
<div class="t" style="left:686px;top:484px;width:46.45px;text-align:right;letter-spacing:0.45px">30,00</div>
<div class="t" style="left:733px;top:484px;width:46.45px;text-align:right;letter-spacing:0.45px">150,00</div>
<div class="t" style="left:939px;top:484px;width:74.45px;text-align:right;letter-spacing:0.45px">4.500,00</div>
<div class="t" style="left:1077px;top:484px;width:87.45px;text-align:right;letter-spacing:0.45px">3.825,00</div>
<div class="a" style="left:87px;top:504px;width:1px;height:23px;background:#dcdcdc;"></div>
<div class="a" style="left:138px;top:504px;width:1px;height:23px;background:#dcdcdc;"></div>
<div class="a" style="left:195px;top:504px;width:1px;height:23px;background:#dcdcdc;"></div>
<div class="a" style="left:231px;top:504px;width:1px;height:23px;background:#dcdcdc;"></div>
<div class="a" style="left:292px;top:504px;width:1px;height:23px;background:#dcdcdc;"></div>
<div class="a" style="left:334px;top:504px;width:1px;height:23px;background:#dcdcdc;"></div>
<div class="a" style="left:685px;top:504px;width:1px;height:23px;background:#dcdcdc;"></div>
<div class="a" style="left:732px;top:504px;width:1px;height:23px;background:#dcdcdc;"></div>
<div class="a" style="left:779px;top:504px;width:1px;height:23px;background:#dcdcdc;"></div>
<div class="a" style="left:806px;top:504px;width:1px;height:23px;background:#dcdcdc;"></div>
<div class="a" style="left:859px;top:504px;width:1px;height:23px;background:#dcdcdc;"></div>
<div class="a" style="left:938px;top:504px;width:1px;height:23px;background:#dcdcdc;"></div>
<div class="a" style="left:1013px;top:504px;width:1px;height:23px;background:#dcdcdc;"></div>
<div class="a" style="left:1077px;top:504px;width:1px;height:23px;background:#dcdcdc;"></div>
<div class="a" style="left:1165px;top:504px;width:1px;height:23px;background:#dcdcdc;"></div>
<div class="t" style="left:33px;top:507px;width:54.6px;text-align:center;letter-spacing:0.6px">11/2019</div>
<div class="t" style="left:88px;top:507px;width:50.2px;text-align:center;letter-spacing:0.2px">0014</div>
<div class="t" style="left:139px;top:507px;width:56.2px;text-align:center;letter-spacing:0.2px">0008</div>
<div class="t" style="left:195.5px;top:507px;width:35.2px;text-align:center;letter-spacing:0.2px">006</div>
<div class="t" style="left:232px;top:509px;width:60px;text-align:center;font-size:11px;letter-spacing:0.1px">00000026</div>
<div class="t" style="left:292.5px;top:507px;width:41.45px;text-align:center;letter-spacing:0.45px">0001</div>
<div class="t" style="left:336px;top:507px;transform:scaleX(0.8958333333333334);transform-origin:0 0">CINE EN AMERICA</div>
<div class="t" style="left:425px;top:507px">1 Av 00030'  el 17-11</div>
<div class="t" style="left:686px;top:507px;width:46.45px;text-align:right;letter-spacing:0.45px">30,00</div>
<div class="t" style="left:733px;top:507px;width:46.45px;text-align:right;letter-spacing:0.45px">150,00</div>
<div class="t" style="left:939px;top:507px;width:74.45px;text-align:right;letter-spacing:0.45px">4.500,00</div>
<div class="t" style="left:1077px;top:507px;width:87.45px;text-align:right;letter-spacing:0.45px">3.825,00</div>
<div class="a" style="left:34px;top:527px;width:1196px;height:22px;background:#f4f4f4;"></div>
<div class="a" style="left:87px;top:527px;width:1px;height:23px;background:#dcdcdc;"></div>
<div class="a" style="left:138px;top:527px;width:1px;height:23px;background:#dcdcdc;"></div>
<div class="a" style="left:195px;top:527px;width:1px;height:23px;background:#dcdcdc;"></div>
<div class="a" style="left:231px;top:527px;width:1px;height:23px;background:#dcdcdc;"></div>
<div class="a" style="left:292px;top:527px;width:1px;height:23px;background:#dcdcdc;"></div>
<div class="a" style="left:334px;top:527px;width:1px;height:23px;background:#dcdcdc;"></div>
<div class="a" style="left:685px;top:527px;width:1px;height:23px;background:#dcdcdc;"></div>
<div class="a" style="left:732px;top:527px;width:1px;height:23px;background:#dcdcdc;"></div>
<div class="a" style="left:779px;top:527px;width:1px;height:23px;background:#dcdcdc;"></div>
<div class="a" style="left:806px;top:527px;width:1px;height:23px;background:#dcdcdc;"></div>
<div class="a" style="left:859px;top:527px;width:1px;height:23px;background:#dcdcdc;"></div>
<div class="a" style="left:938px;top:527px;width:1px;height:23px;background:#dcdcdc;"></div>
<div class="a" style="left:1013px;top:527px;width:1px;height:23px;background:#dcdcdc;"></div>
<div class="a" style="left:1077px;top:527px;width:1px;height:23px;background:#dcdcdc;"></div>
<div class="a" style="left:1165px;top:527px;width:1px;height:23px;background:#dcdcdc;"></div>
<div class="t" style="left:33px;top:530px;width:54.6px;text-align:center;letter-spacing:0.6px">11/2019</div>
<div class="t" style="left:88px;top:530px;width:50.2px;text-align:center;letter-spacing:0.2px">0014</div>
<div class="t" style="left:139px;top:530px;width:56.2px;text-align:center;letter-spacing:0.2px">0008</div>
<div class="t" style="left:195.5px;top:530px;width:35.2px;text-align:center;letter-spacing:0.2px">006</div>
<div class="t" style="left:232px;top:532px;width:60px;text-align:center;font-size:11px;letter-spacing:0.1px">00000026</div>
<div class="t" style="left:292.5px;top:530px;width:41.45px;text-align:center;letter-spacing:0.45px">0001</div>
<div class="t" style="left:336px;top:530px;transform:scaleX(0.8958333333333334);transform-origin:0 0">CINE EN AMERICA</div>
<div class="t" style="left:425px;top:530px">1 Av 00030'  el 24-11</div>
<div class="t" style="left:686px;top:530px;width:46.45px;text-align:right;letter-spacing:0.45px">30,00</div>
<div class="t" style="left:733px;top:530px;width:46.45px;text-align:right;letter-spacing:0.45px">150,00</div>
<div class="t" style="left:939px;top:530px;width:74.45px;text-align:right;letter-spacing:0.45px">4.500,00</div>
<div class="t" style="left:1077px;top:530px;width:87.45px;text-align:right;letter-spacing:0.45px">3.825,00</div>
<div class="a" style="left:87px;top:550px;width:1px;height:23px;background:#dcdcdc;"></div>
<div class="a" style="left:138px;top:550px;width:1px;height:23px;background:#dcdcdc;"></div>
<div class="a" style="left:195px;top:550px;width:1px;height:23px;background:#dcdcdc;"></div>
<div class="a" style="left:231px;top:550px;width:1px;height:23px;background:#dcdcdc;"></div>
<div class="a" style="left:292px;top:550px;width:1px;height:23px;background:#dcdcdc;"></div>
<div class="a" style="left:334px;top:550px;width:1px;height:23px;background:#dcdcdc;"></div>
<div class="a" style="left:685px;top:550px;width:1px;height:23px;background:#dcdcdc;"></div>
<div class="a" style="left:732px;top:550px;width:1px;height:23px;background:#dcdcdc;"></div>
<div class="a" style="left:779px;top:550px;width:1px;height:23px;background:#dcdcdc;"></div>
<div class="a" style="left:806px;top:550px;width:1px;height:23px;background:#dcdcdc;"></div>
<div class="a" style="left:859px;top:550px;width:1px;height:23px;background:#dcdcdc;"></div>
<div class="a" style="left:938px;top:550px;width:1px;height:23px;background:#dcdcdc;"></div>
<div class="a" style="left:1013px;top:550px;width:1px;height:23px;background:#dcdcdc;"></div>
<div class="a" style="left:1077px;top:550px;width:1px;height:23px;background:#dcdcdc;"></div>
<div class="a" style="left:1165px;top:550px;width:1px;height:23px;background:#dcdcdc;"></div>
<div class="t" style="left:33px;top:553px;width:54.6px;text-align:center;letter-spacing:0.6px">11/2019</div>
<div class="t" style="left:88px;top:553px;width:50.2px;text-align:center;letter-spacing:0.2px">0014</div>
<div class="t" style="left:139px;top:553px;width:56.2px;text-align:center;letter-spacing:0.2px">0008</div>
<div class="t" style="left:195.5px;top:553px;width:35.2px;text-align:center;letter-spacing:0.2px">007</div>
<div class="t" style="left:232px;top:555px;width:60px;text-align:center;font-size:11px;letter-spacing:0.1px">00000026</div>
<div class="t" style="left:292.5px;top:553px;width:41.45px;text-align:center;letter-spacing:0.45px">0001</div>
<div class="t" style="left:336px;top:553px;transform:scaleX(0.90625);transform-origin:0 0">KUBIK</div>
<div class="t" style="left:369px;top:553px">1 Av 00030'  el 03-11</div>
<div class="t" style="left:686px;top:553px;width:46.45px;text-align:right;letter-spacing:0.45px">30,00</div>
<div class="t" style="left:733px;top:553px;width:46.45px;text-align:right;letter-spacing:0.45px">150,00</div>
<div class="t" style="left:939px;top:553px;width:74.45px;text-align:right;letter-spacing:0.45px">4.500,00</div>
<div class="t" style="left:1077px;top:553px;width:87.45px;text-align:right;letter-spacing:0.45px">3.825,00</div>
<div class="a" style="left:34px;top:573px;width:1196px;height:22px;background:#f4f4f4;"></div>
<div class="a" style="left:87px;top:573px;width:1px;height:23px;background:#dcdcdc;"></div>
<div class="a" style="left:138px;top:573px;width:1px;height:23px;background:#dcdcdc;"></div>
<div class="a" style="left:195px;top:573px;width:1px;height:23px;background:#dcdcdc;"></div>
<div class="a" style="left:231px;top:573px;width:1px;height:23px;background:#dcdcdc;"></div>
<div class="a" style="left:292px;top:573px;width:1px;height:23px;background:#dcdcdc;"></div>
<div class="a" style="left:334px;top:573px;width:1px;height:23px;background:#dcdcdc;"></div>
<div class="a" style="left:685px;top:573px;width:1px;height:23px;background:#dcdcdc;"></div>
<div class="a" style="left:732px;top:573px;width:1px;height:23px;background:#dcdcdc;"></div>
<div class="a" style="left:779px;top:573px;width:1px;height:23px;background:#dcdcdc;"></div>
<div class="a" style="left:806px;top:573px;width:1px;height:23px;background:#dcdcdc;"></div>
<div class="a" style="left:859px;top:573px;width:1px;height:23px;background:#dcdcdc;"></div>
<div class="a" style="left:938px;top:573px;width:1px;height:23px;background:#dcdcdc;"></div>
<div class="a" style="left:1013px;top:573px;width:1px;height:23px;background:#dcdcdc;"></div>
<div class="a" style="left:1077px;top:573px;width:1px;height:23px;background:#dcdcdc;"></div>
<div class="a" style="left:1165px;top:573px;width:1px;height:23px;background:#dcdcdc;"></div>
<div class="t" style="left:33px;top:576px;width:54.6px;text-align:center;letter-spacing:0.6px">11/2019</div>
<div class="t" style="left:88px;top:576px;width:50.2px;text-align:center;letter-spacing:0.2px">0014</div>
<div class="t" style="left:139px;top:576px;width:56.2px;text-align:center;letter-spacing:0.2px">0008</div>
<div class="t" style="left:195.5px;top:576px;width:35.2px;text-align:center;letter-spacing:0.2px">007</div>
<div class="t" style="left:232px;top:578px;width:60px;text-align:center;font-size:11px;letter-spacing:0.1px">00000026</div>
<div class="t" style="left:292.5px;top:576px;width:41.45px;text-align:center;letter-spacing:0.45px">0001</div>
<div class="t" style="left:336px;top:576px;transform:scaleX(0.90625);transform-origin:0 0">KUBIK</div>
<div class="t" style="left:369px;top:576px">1 Av 00030'  el 10-11</div>
<div class="t" style="left:686px;top:576px;width:46.45px;text-align:right;letter-spacing:0.45px">30,00</div>
<div class="t" style="left:733px;top:576px;width:46.45px;text-align:right;letter-spacing:0.45px">150,00</div>
<div class="t" style="left:939px;top:576px;width:74.45px;text-align:right;letter-spacing:0.45px">4.500,00</div>
<div class="t" style="left:1077px;top:576px;width:87.45px;text-align:right;letter-spacing:0.45px">3.825,00</div>
<div class="a" style="left:87px;top:596px;width:1px;height:23px;background:#dcdcdc;"></div>
<div class="a" style="left:138px;top:596px;width:1px;height:23px;background:#dcdcdc;"></div>
<div class="a" style="left:195px;top:596px;width:1px;height:23px;background:#dcdcdc;"></div>
<div class="a" style="left:231px;top:596px;width:1px;height:23px;background:#dcdcdc;"></div>
<div class="a" style="left:292px;top:596px;width:1px;height:23px;background:#dcdcdc;"></div>
<div class="a" style="left:334px;top:596px;width:1px;height:23px;background:#dcdcdc;"></div>
<div class="a" style="left:685px;top:596px;width:1px;height:23px;background:#dcdcdc;"></div>
<div class="a" style="left:732px;top:596px;width:1px;height:23px;background:#dcdcdc;"></div>
<div class="a" style="left:779px;top:596px;width:1px;height:23px;background:#dcdcdc;"></div>
<div class="a" style="left:806px;top:596px;width:1px;height:23px;background:#dcdcdc;"></div>
<div class="a" style="left:859px;top:596px;width:1px;height:23px;background:#dcdcdc;"></div>
<div class="a" style="left:938px;top:596px;width:1px;height:23px;background:#dcdcdc;"></div>
<div class="a" style="left:1013px;top:596px;width:1px;height:23px;background:#dcdcdc;"></div>
<div class="a" style="left:1077px;top:596px;width:1px;height:23px;background:#dcdcdc;"></div>
<div class="a" style="left:1165px;top:596px;width:1px;height:23px;background:#dcdcdc;"></div>
<div class="t" style="left:33px;top:599px;width:54.6px;text-align:center;letter-spacing:0.6px">11/2019</div>
<div class="t" style="left:88px;top:599px;width:50.2px;text-align:center;letter-spacing:0.2px">0014</div>
<div class="t" style="left:139px;top:599px;width:56.2px;text-align:center;letter-spacing:0.2px">0008</div>
<div class="t" style="left:195.5px;top:599px;width:35.2px;text-align:center;letter-spacing:0.2px">007</div>
<div class="t" style="left:232px;top:601px;width:60px;text-align:center;font-size:11px;letter-spacing:0.1px">00000026</div>
<div class="t" style="left:292.5px;top:599px;width:41.45px;text-align:center;letter-spacing:0.45px">0001</div>
<div class="t" style="left:336px;top:599px;transform:scaleX(0.90625);transform-origin:0 0">KUBIK</div>
<div class="t" style="left:369px;top:599px">1 Av 00030'  el 17-11</div>
<div class="t" style="left:686px;top:599px;width:46.45px;text-align:right;letter-spacing:0.45px">30,00</div>
<div class="t" style="left:733px;top:599px;width:46.45px;text-align:right;letter-spacing:0.45px">150,00</div>
<div class="t" style="left:939px;top:599px;width:74.45px;text-align:right;letter-spacing:0.45px">4.500,00</div>
<div class="t" style="left:1077px;top:599px;width:87.45px;text-align:right;letter-spacing:0.45px">3.825,00</div>
<div class="a" style="left:34px;top:619px;width:1196px;height:22px;background:#f4f4f4;"></div>
<div class="a" style="left:87px;top:619px;width:1px;height:23px;background:#dcdcdc;"></div>
<div class="a" style="left:138px;top:619px;width:1px;height:23px;background:#dcdcdc;"></div>
<div class="a" style="left:195px;top:619px;width:1px;height:23px;background:#dcdcdc;"></div>
<div class="a" style="left:231px;top:619px;width:1px;height:23px;background:#dcdcdc;"></div>
<div class="a" style="left:292px;top:619px;width:1px;height:23px;background:#dcdcdc;"></div>
<div class="a" style="left:334px;top:619px;width:1px;height:23px;background:#dcdcdc;"></div>
<div class="a" style="left:685px;top:619px;width:1px;height:23px;background:#dcdcdc;"></div>
<div class="a" style="left:732px;top:619px;width:1px;height:23px;background:#dcdcdc;"></div>
<div class="a" style="left:779px;top:619px;width:1px;height:23px;background:#dcdcdc;"></div>
<div class="a" style="left:806px;top:619px;width:1px;height:23px;background:#dcdcdc;"></div>
<div class="a" style="left:859px;top:619px;width:1px;height:23px;background:#dcdcdc;"></div>
<div class="a" style="left:938px;top:619px;width:1px;height:23px;background:#dcdcdc;"></div>
<div class="a" style="left:1013px;top:619px;width:1px;height:23px;background:#dcdcdc;"></div>
<div class="a" style="left:1077px;top:619px;width:1px;height:23px;background:#dcdcdc;"></div>
<div class="a" style="left:1165px;top:619px;width:1px;height:23px;background:#dcdcdc;"></div>
<div class="t" style="left:33px;top:622px;width:54.6px;text-align:center;letter-spacing:0.6px">11/2019</div>
<div class="t" style="left:88px;top:622px;width:50.2px;text-align:center;letter-spacing:0.2px">0014</div>
<div class="t" style="left:139px;top:622px;width:56.2px;text-align:center;letter-spacing:0.2px">0008</div>
<div class="t" style="left:195.5px;top:622px;width:35.2px;text-align:center;letter-spacing:0.2px">007</div>
<div class="t" style="left:232px;top:624px;width:60px;text-align:center;font-size:11px;letter-spacing:0.1px">00000026</div>
<div class="t" style="left:292.5px;top:622px;width:41.45px;text-align:center;letter-spacing:0.45px">0001</div>
<div class="t" style="left:336px;top:622px;transform:scaleX(0.90625);transform-origin:0 0">KUBIK</div>
<div class="t" style="left:369px;top:622px">1 Av 00030'  el 24-11</div>
<div class="t" style="left:686px;top:622px;width:46.45px;text-align:right;letter-spacing:0.45px">30,00</div>
<div class="t" style="left:733px;top:622px;width:46.45px;text-align:right;letter-spacing:0.45px">150,00</div>
<div class="t" style="left:939px;top:622px;width:74.45px;text-align:right;letter-spacing:0.45px">4.500,00</div>
<div class="t" style="left:1077px;top:622px;width:87.45px;text-align:right;letter-spacing:0.45px">3.825,00</div>
<div class="a" style="left:87px;top:642px;width:1px;height:23px;background:#dcdcdc;"></div>
<div class="a" style="left:138px;top:642px;width:1px;height:23px;background:#dcdcdc;"></div>
<div class="a" style="left:195px;top:642px;width:1px;height:23px;background:#dcdcdc;"></div>
<div class="a" style="left:231px;top:642px;width:1px;height:23px;background:#dcdcdc;"></div>
<div class="a" style="left:292px;top:642px;width:1px;height:23px;background:#dcdcdc;"></div>
<div class="a" style="left:334px;top:642px;width:1px;height:23px;background:#dcdcdc;"></div>
<div class="a" style="left:685px;top:642px;width:1px;height:23px;background:#dcdcdc;"></div>
<div class="a" style="left:732px;top:642px;width:1px;height:23px;background:#dcdcdc;"></div>
<div class="a" style="left:779px;top:642px;width:1px;height:23px;background:#dcdcdc;"></div>
<div class="a" style="left:806px;top:642px;width:1px;height:23px;background:#dcdcdc;"></div>
<div class="a" style="left:859px;top:642px;width:1px;height:23px;background:#dcdcdc;"></div>
<div class="a" style="left:938px;top:642px;width:1px;height:23px;background:#dcdcdc;"></div>
<div class="a" style="left:1013px;top:642px;width:1px;height:23px;background:#dcdcdc;"></div>
<div class="a" style="left:1077px;top:642px;width:1px;height:23px;background:#dcdcdc;"></div>
<div class="a" style="left:1165px;top:642px;width:1px;height:23px;background:#dcdcdc;"></div>
<div class="t" style="left:33px;top:645px;width:54.6px;text-align:center;letter-spacing:0.6px">11/2019</div>
<div class="t" style="left:88px;top:645px;width:50.2px;text-align:center;letter-spacing:0.2px">0014</div>
<div class="t" style="left:139px;top:645px;width:56.2px;text-align:center;letter-spacing:0.2px">0008</div>
<div class="t" style="left:195.5px;top:645px;width:35.2px;text-align:center;letter-spacing:0.2px">008</div>
<div class="t" style="left:232px;top:647px;width:60px;text-align:center;font-size:11px;letter-spacing:0.1px">00000026</div>
<div class="t" style="left:292.5px;top:645px;width:41.45px;text-align:center;letter-spacing:0.45px">0001</div>
<div class="t" style="left:336px;top:645px;transform:scaleX(0.8691588785046729);transform-origin:0 0">PASION DE SABADO</div>
<div class="t" style="left:433px;top:645px">1 Av 00030'  el 03-11</div>
<div class="t" style="left:686px;top:645px;width:46.45px;text-align:right;letter-spacing:0.45px">30,00</div>
<div class="t" style="left:733px;top:645px;width:46.45px;text-align:right;letter-spacing:0.45px">150,00</div>
<div class="t" style="left:939px;top:645px;width:74.45px;text-align:right;letter-spacing:0.45px">4.500,00</div>
<div class="t" style="left:1077px;top:645px;width:87.45px;text-align:right;letter-spacing:0.45px">3.825,00</div>
<div class="a" style="left:34px;top:665px;width:1196px;height:22px;background:#f4f4f4;"></div>
<div class="a" style="left:87px;top:665px;width:1px;height:23px;background:#dcdcdc;"></div>
<div class="a" style="left:138px;top:665px;width:1px;height:23px;background:#dcdcdc;"></div>
<div class="a" style="left:195px;top:665px;width:1px;height:23px;background:#dcdcdc;"></div>
<div class="a" style="left:231px;top:665px;width:1px;height:23px;background:#dcdcdc;"></div>
<div class="a" style="left:292px;top:665px;width:1px;height:23px;background:#dcdcdc;"></div>
<div class="a" style="left:334px;top:665px;width:1px;height:23px;background:#dcdcdc;"></div>
<div class="a" style="left:685px;top:665px;width:1px;height:23px;background:#dcdcdc;"></div>
<div class="a" style="left:732px;top:665px;width:1px;height:23px;background:#dcdcdc;"></div>
<div class="a" style="left:779px;top:665px;width:1px;height:23px;background:#dcdcdc;"></div>
<div class="a" style="left:806px;top:665px;width:1px;height:23px;background:#dcdcdc;"></div>
<div class="a" style="left:859px;top:665px;width:1px;height:23px;background:#dcdcdc;"></div>
<div class="a" style="left:938px;top:665px;width:1px;height:23px;background:#dcdcdc;"></div>
<div class="a" style="left:1013px;top:665px;width:1px;height:23px;background:#dcdcdc;"></div>
<div class="a" style="left:1077px;top:665px;width:1px;height:23px;background:#dcdcdc;"></div>
<div class="a" style="left:1165px;top:665px;width:1px;height:23px;background:#dcdcdc;"></div>
<div class="t" style="left:33px;top:668px;width:54.6px;text-align:center;letter-spacing:0.6px">11/2019</div>
<div class="t" style="left:88px;top:668px;width:50.2px;text-align:center;letter-spacing:0.2px">0014</div>
<div class="t" style="left:139px;top:668px;width:56.2px;text-align:center;letter-spacing:0.2px">0008</div>
<div class="t" style="left:195.5px;top:668px;width:35.2px;text-align:center;letter-spacing:0.2px">008</div>
<div class="t" style="left:232px;top:670px;width:60px;text-align:center;font-size:11px;letter-spacing:0.1px">00000026</div>
<div class="t" style="left:292.5px;top:668px;width:41.45px;text-align:center;letter-spacing:0.45px">0001</div>
<div class="t" style="left:336px;top:668px;transform:scaleX(0.8691588785046729);transform-origin:0 0">PASION DE SABADO</div>
<div class="t" style="left:433px;top:668px">1 Av 00030'  el 10-11</div>
<div class="t" style="left:686px;top:668px;width:46.45px;text-align:right;letter-spacing:0.45px">30,00</div>
<div class="t" style="left:733px;top:668px;width:46.45px;text-align:right;letter-spacing:0.45px">150,00</div>
<div class="t" style="left:939px;top:668px;width:74.45px;text-align:right;letter-spacing:0.45px">4.500,00</div>
<div class="t" style="left:1077px;top:668px;width:87.45px;text-align:right;letter-spacing:0.45px">3.825,00</div>
<div class="a" style="left:87px;top:688px;width:1px;height:23px;background:#dcdcdc;"></div>
<div class="a" style="left:138px;top:688px;width:1px;height:23px;background:#dcdcdc;"></div>
<div class="a" style="left:195px;top:688px;width:1px;height:23px;background:#dcdcdc;"></div>
<div class="a" style="left:231px;top:688px;width:1px;height:23px;background:#dcdcdc;"></div>
<div class="a" style="left:292px;top:688px;width:1px;height:23px;background:#dcdcdc;"></div>
<div class="a" style="left:334px;top:688px;width:1px;height:23px;background:#dcdcdc;"></div>
<div class="a" style="left:685px;top:688px;width:1px;height:23px;background:#dcdcdc;"></div>
<div class="a" style="left:732px;top:688px;width:1px;height:23px;background:#dcdcdc;"></div>
<div class="a" style="left:779px;top:688px;width:1px;height:23px;background:#dcdcdc;"></div>
<div class="a" style="left:806px;top:688px;width:1px;height:23px;background:#dcdcdc;"></div>
<div class="a" style="left:859px;top:688px;width:1px;height:23px;background:#dcdcdc;"></div>
<div class="a" style="left:938px;top:688px;width:1px;height:23px;background:#dcdcdc;"></div>
<div class="a" style="left:1013px;top:688px;width:1px;height:23px;background:#dcdcdc;"></div>
<div class="a" style="left:1077px;top:688px;width:1px;height:23px;background:#dcdcdc;"></div>
<div class="a" style="left:1165px;top:688px;width:1px;height:23px;background:#dcdcdc;"></div>
<div class="t" style="left:33px;top:691px;width:54.6px;text-align:center;letter-spacing:0.6px">11/2019</div>
<div class="t" style="left:88px;top:691px;width:50.2px;text-align:center;letter-spacing:0.2px">0014</div>
<div class="t" style="left:139px;top:691px;width:56.2px;text-align:center;letter-spacing:0.2px">0008</div>
<div class="t" style="left:195.5px;top:691px;width:35.2px;text-align:center;letter-spacing:0.2px">008</div>
<div class="t" style="left:232px;top:693px;width:60px;text-align:center;font-size:11px;letter-spacing:0.1px">00000026</div>
<div class="t" style="left:292.5px;top:691px;width:41.45px;text-align:center;letter-spacing:0.45px">0001</div>
<div class="t" style="left:336px;top:691px;transform:scaleX(0.8691588785046729);transform-origin:0 0">PASION DE SABADO</div>
<div class="t" style="left:433px;top:691px">1 Av 00030'  el 17-11</div>
<div class="t" style="left:686px;top:691px;width:46.45px;text-align:right;letter-spacing:0.45px">30,00</div>
<div class="t" style="left:733px;top:691px;width:46.45px;text-align:right;letter-spacing:0.45px">150,00</div>
<div class="t" style="left:939px;top:691px;width:74.45px;text-align:right;letter-spacing:0.45px">4.500,00</div>
<div class="t" style="left:1077px;top:691px;width:87.45px;text-align:right;letter-spacing:0.45px">3.825,00</div>
<div class="a" style="left:34px;top:711px;width:1196px;height:22px;background:#f4f4f4;"></div>
<div class="a" style="left:87px;top:711px;width:1px;height:23px;background:#dcdcdc;"></div>
<div class="a" style="left:138px;top:711px;width:1px;height:23px;background:#dcdcdc;"></div>
<div class="a" style="left:195px;top:711px;width:1px;height:23px;background:#dcdcdc;"></div>
<div class="a" style="left:231px;top:711px;width:1px;height:23px;background:#dcdcdc;"></div>
<div class="a" style="left:292px;top:711px;width:1px;height:23px;background:#dcdcdc;"></div>
<div class="a" style="left:334px;top:711px;width:1px;height:23px;background:#dcdcdc;"></div>
<div class="a" style="left:685px;top:711px;width:1px;height:23px;background:#dcdcdc;"></div>
<div class="a" style="left:732px;top:711px;width:1px;height:23px;background:#dcdcdc;"></div>
<div class="a" style="left:779px;top:711px;width:1px;height:23px;background:#dcdcdc;"></div>
<div class="a" style="left:806px;top:711px;width:1px;height:23px;background:#dcdcdc;"></div>
<div class="a" style="left:859px;top:711px;width:1px;height:23px;background:#dcdcdc;"></div>
<div class="a" style="left:938px;top:711px;width:1px;height:23px;background:#dcdcdc;"></div>
<div class="a" style="left:1013px;top:711px;width:1px;height:23px;background:#dcdcdc;"></div>
<div class="a" style="left:1077px;top:711px;width:1px;height:23px;background:#dcdcdc;"></div>
<div class="a" style="left:1165px;top:711px;width:1px;height:23px;background:#dcdcdc;"></div>
<div class="t" style="left:33px;top:714px;width:54.6px;text-align:center;letter-spacing:0.6px">11/2019</div>
<div class="t" style="left:88px;top:714px;width:50.2px;text-align:center;letter-spacing:0.2px">0014</div>
<div class="t" style="left:139px;top:714px;width:56.2px;text-align:center;letter-spacing:0.2px">0008</div>
<div class="t" style="left:195.5px;top:714px;width:35.2px;text-align:center;letter-spacing:0.2px">008</div>
<div class="t" style="left:232px;top:716px;width:60px;text-align:center;font-size:11px;letter-spacing:0.1px">00000026</div>
<div class="t" style="left:292.5px;top:714px;width:41.45px;text-align:center;letter-spacing:0.45px">0001</div>
<div class="t" style="left:336px;top:714px;transform:scaleX(0.8691588785046729);transform-origin:0 0">PASION DE SABADO</div>
<div class="t" style="left:433px;top:714px">1 Av 00030'  el 24-11</div>
<div class="t" style="left:686px;top:714px;width:46.45px;text-align:right;letter-spacing:0.45px">30,00</div>
<div class="t" style="left:733px;top:714px;width:46.45px;text-align:right;letter-spacing:0.45px">150,00</div>
<div class="t" style="left:939px;top:714px;width:74.45px;text-align:right;letter-spacing:0.45px">4.500,00</div>
<div class="t" style="left:1077px;top:714px;width:87.45px;text-align:right;letter-spacing:0.45px">3.825,00</div>
<div class="a" style="left:87px;top:734px;width:1px;height:19px;background:#dcdcdc;"></div>
<div class="a" style="left:138px;top:734px;width:1px;height:19px;background:#dcdcdc;"></div>
<div class="a" style="left:195px;top:734px;width:1px;height:19px;background:#dcdcdc;"></div>
<div class="a" style="left:231px;top:734px;width:1px;height:19px;background:#dcdcdc;"></div>
<div class="a" style="left:292px;top:734px;width:1px;height:19px;background:#dcdcdc;"></div>
<div class="a" style="left:334px;top:734px;width:1px;height:19px;background:#dcdcdc;"></div>
<div class="a" style="left:859px;top:734px;width:1px;height:19px;background:#dcdcdc;"></div>
<div class="a" style="left:938px;top:734px;width:1px;height:19px;background:#dcdcdc;"></div>
<div class="a" style="left:1013px;top:734px;width:1px;height:19px;background:#dcdcdc;"></div>
<div class="a" style="left:1077px;top:734px;width:1px;height:19px;background:#dcdcdc;"></div>
<div class="a" style="left:1165px;top:734px;width:1px;height:19px;background:#dcdcdc;"></div>
<div class="tb" style="left:336px;top:737px;letter-spacing:0.06px">Subtotal Pauta N° 110008/2019 de l</div>
<div class="tb" style="left:939px;top:737px;width:74.4px;text-align:right;letter-spacing:0.4px">103.500,00</div>
<div class="tb" style="left:1077px;top:737px;width:87.4px;text-align:right;letter-spacing:0.4px">87.975,00</div>
<div class="a" style="left:34px;top:753px;width:1196px;height:18px;background:#f4f4f4;"></div>
<div class="a" style="left:87px;top:753px;width:1px;height:19px;background:#dcdcdc;"></div>
<div class="a" style="left:138px;top:753px;width:1px;height:19px;background:#dcdcdc;"></div>
<div class="a" style="left:195px;top:753px;width:1px;height:19px;background:#dcdcdc;"></div>
<div class="a" style="left:231px;top:753px;width:1px;height:19px;background:#dcdcdc;"></div>
<div class="a" style="left:292px;top:753px;width:1px;height:19px;background:#dcdcdc;"></div>
<div class="a" style="left:334px;top:753px;width:1px;height:19px;background:#dcdcdc;"></div>
<div class="a" style="left:685px;top:753px;width:1px;height:19px;background:#dcdcdc;"></div>
<div class="a" style="left:732px;top:753px;width:1px;height:19px;background:#dcdcdc;"></div>
<div class="a" style="left:779px;top:753px;width:1px;height:19px;background:#dcdcdc;"></div>
<div class="a" style="left:806px;top:753px;width:1px;height:19px;background:#dcdcdc;"></div>
<div class="a" style="left:859px;top:753px;width:1px;height:19px;background:#dcdcdc;"></div>
<div class="a" style="left:938px;top:753px;width:1px;height:19px;background:#dcdcdc;"></div>
<div class="a" style="left:1013px;top:753px;width:1px;height:19px;background:#dcdcdc;"></div>
<div class="a" style="left:1077px;top:753px;width:1px;height:19px;background:#dcdcdc;"></div>
<div class="a" style="left:1165px;top:753px;width:1px;height:19px;background:#dcdcdc;"></div>
<div class="tb" style="left:336px;top:756px;letter-spacing:0.45px">Subtotal</div>
<div class="tb" style="left:433px;top:756px;letter-spacing:0.08px">TV Desde 01/01/2019 Hasta 31/08/2020</div>
<div class="tb" style="left:939px;top:756px;width:74.4px;text-align:right;letter-spacing:0.4px">1.836.879,92</div>
<div class="tb" style="left:1077px;top:756px;width:87.4px;text-align:right;letter-spacing:0.4px">1.789.406,46</div>
<div class="a" style="left:87px;top:772px;width:1px;height:23px;background:#dcdcdc;"></div>
<div class="a" style="left:138px;top:772px;width:1px;height:23px;background:#dcdcdc;"></div>
<div class="a" style="left:195px;top:772px;width:1px;height:23px;background:#dcdcdc;"></div>
<div class="a" style="left:231px;top:772px;width:1px;height:23px;background:#dcdcdc;"></div>
<div class="a" style="left:292px;top:772px;width:1px;height:23px;background:#dcdcdc;"></div>
<div class="a" style="left:334px;top:772px;width:1px;height:23px;background:#dcdcdc;"></div>
<div class="a" style="left:685px;top:772px;width:1px;height:23px;background:#dcdcdc;"></div>
<div class="a" style="left:732px;top:772px;width:1px;height:23px;background:#dcdcdc;"></div>
<div class="a" style="left:779px;top:772px;width:1px;height:23px;background:#dcdcdc;"></div>
<div class="a" style="left:806px;top:772px;width:1px;height:23px;background:#dcdcdc;"></div>
<div class="a" style="left:859px;top:772px;width:1px;height:23px;background:#dcdcdc;"></div>
<div class="a" style="left:938px;top:772px;width:1px;height:23px;background:#dcdcdc;"></div>
<div class="a" style="left:1013px;top:772px;width:1px;height:23px;background:#dcdcdc;"></div>
<div class="a" style="left:1077px;top:772px;width:1px;height:23px;background:#dcdcdc;"></div>
<div class="a" style="left:1165px;top:772px;width:1px;height:23px;background:#dcdcdc;"></div>
<div class="a" style="left:34px;top:795px;width:1196px;height:18px;background:#f4f4f4;"></div>
<div class="a" style="left:87px;top:795px;width:1px;height:19px;background:#dcdcdc;"></div>
<div class="a" style="left:138px;top:795px;width:1px;height:19px;background:#dcdcdc;"></div>
<div class="a" style="left:195px;top:795px;width:1px;height:19px;background:#dcdcdc;"></div>
<div class="a" style="left:231px;top:795px;width:1px;height:19px;background:#dcdcdc;"></div>
<div class="a" style="left:292px;top:795px;width:1px;height:19px;background:#dcdcdc;"></div>
<div class="a" style="left:334px;top:795px;width:1px;height:19px;background:#dcdcdc;"></div>
<div class="a" style="left:732px;top:795px;width:1px;height:19px;background:#dcdcdc;"></div>
<div class="a" style="left:779px;top:795px;width:1px;height:19px;background:#dcdcdc;"></div>
<div class="a" style="left:806px;top:795px;width:1px;height:19px;background:#dcdcdc;"></div>
<div class="a" style="left:859px;top:795px;width:1px;height:19px;background:#dcdcdc;"></div>
<div class="a" style="left:938px;top:795px;width:1px;height:19px;background:#dcdcdc;"></div>
<div class="a" style="left:1013px;top:795px;width:1px;height:19px;background:#dcdcdc;"></div>
<div class="a" style="left:1077px;top:795px;width:1px;height:19px;background:#dcdcdc;"></div>
<div class="a" style="left:1165px;top:795px;width:1px;height:19px;background:#dcdcdc;"></div>
<div class="tb" style="left:336px;top:798px;letter-spacing:-0.05px">TOTAL PENDIENTE AMERICA T.V. S.A. Desde 01/01/2019 Hasta 31/08/2020</div>
<div class="tb" style="left:939px;top:798px;width:74.4px;text-align:right;letter-spacing:0.4px">1.836.879,92</div>
<div class="tb" style="left:1077px;top:798px;width:87.4px;text-align:right;letter-spacing:0.4px">1.789.406,46</div>
<div class="a" style="left:87px;top:814px;width:1px;height:23px;background:#dcdcdc;"></div>
<div class="a" style="left:138px;top:814px;width:1px;height:23px;background:#dcdcdc;"></div>
<div class="a" style="left:195px;top:814px;width:1px;height:23px;background:#dcdcdc;"></div>
<div class="a" style="left:231px;top:814px;width:1px;height:23px;background:#dcdcdc;"></div>
<div class="a" style="left:292px;top:814px;width:1px;height:23px;background:#dcdcdc;"></div>
<div class="a" style="left:334px;top:814px;width:1px;height:23px;background:#dcdcdc;"></div>
<div class="a" style="left:685px;top:814px;width:1px;height:23px;background:#dcdcdc;"></div>
<div class="a" style="left:732px;top:814px;width:1px;height:23px;background:#dcdcdc;"></div>
<div class="a" style="left:779px;top:814px;width:1px;height:23px;background:#dcdcdc;"></div>
<div class="a" style="left:806px;top:814px;width:1px;height:23px;background:#dcdcdc;"></div>
<div class="a" style="left:859px;top:814px;width:1px;height:23px;background:#dcdcdc;"></div>
<div class="a" style="left:938px;top:814px;width:1px;height:23px;background:#dcdcdc;"></div>
<div class="a" style="left:1013px;top:814px;width:1px;height:23px;background:#dcdcdc;"></div>
<div class="a" style="left:1077px;top:814px;width:1px;height:23px;background:#dcdcdc;"></div>
<div class="a" style="left:1165px;top:814px;width:1px;height:23px;background:#dcdcdc;"></div>
<div class="a" style="left:34px;top:837px;width:1196px;height:22px;background:#f4f4f4;"></div>
<div class="a" style="left:87px;top:837px;width:1px;height:22px;background:#dcdcdc;"></div>
<div class="a" style="left:138px;top:837px;width:1px;height:22px;background:#dcdcdc;"></div>
<div class="a" style="left:195px;top:837px;width:1px;height:22px;background:#dcdcdc;"></div>
<div class="a" style="left:231px;top:837px;width:1px;height:22px;background:#dcdcdc;"></div>
<div class="a" style="left:292px;top:837px;width:1px;height:22px;background:#dcdcdc;"></div>
<div class="a" style="left:334px;top:837px;width:1px;height:22px;background:#dcdcdc;"></div>
<div class="a" style="left:685px;top:837px;width:1px;height:22px;background:#dcdcdc;"></div>
<div class="a" style="left:732px;top:837px;width:1px;height:22px;background:#dcdcdc;"></div>
<div class="a" style="left:779px;top:837px;width:1px;height:22px;background:#dcdcdc;"></div>
<div class="a" style="left:806px;top:837px;width:1px;height:22px;background:#dcdcdc;"></div>
<div class="a" style="left:859px;top:837px;width:1px;height:22px;background:#dcdcdc;"></div>
<div class="a" style="left:938px;top:837px;width:1px;height:22px;background:#dcdcdc;"></div>
<div class="a" style="left:1013px;top:837px;width:1px;height:22px;background:#dcdcdc;"></div>
<div class="a" style="left:1077px;top:837px;width:1px;height:22px;background:#dcdcdc;"></div>
<div class="a" style="left:1165px;top:837px;width:1px;height:22px;background:#dcdcdc;"></div>
<div class="a" style="left:33px;top:859px;width:1197px;height:1px;background:#9a9a9a;"></div>
<div class="a" style="left:33px;top:860px;width:1197px;height:6px;background:#e4e4e4;"></div>
<div class="a" style="left:33px;top:163px;width:1px;height:696px;background:#ffffff;"></div>
<div class="a" style="left:1230px;top:144px;width:9px;height:672px;background-color:#fff;background-image:repeating-conic-gradient(#ececec 0 25%, #ffffff 0 50%);background-size:2px 2px"></div>
<svg class="a" style="left:1230px;top:128px" width="9" height="16" viewBox="0 0 9 16">
<rect x="0" y="0" width="9" height="16" fill="#f0f0f0"/>
<rect x="0" y="0" width="9" height="1" fill="#e8e8e8"/>
<rect x="0" y="0" width="1" height="15" fill="#e8e8e8"/>
<rect x="1" y="1" width="8" height="1" fill="#fff"/>
<rect x="1" y="1" width="1" height="13" fill="#fff"/>
<rect x="0" y="14" width="9" height="1" fill="#a0a0a0"/>
<rect x="0" y="15" width="9" height="1" fill="#6a6a6a"/>
<path d="M4.5 9 L8.5 5 L12.5 9 Z" fill="#000"/>
</svg>
<svg class="a" style="left:1230px;top:816px" width="9" height="50" viewBox="0 0 9 50">
<rect x="0" y="0" width="9" height="44" fill="#efefef"/>
<rect x="0" y="0" width="9" height="1" fill="#e3e3e3"/>
<rect x="0" y="0" width="1" height="44" fill="#e3e3e3"/>
<rect x="1" y="1" width="8" height="1" fill="#fff"/>
<rect x="1" y="1" width="1" height="43" fill="#fff"/>
<rect x="0" y="44" width="9" height="1" fill="#6a6a6a"/>
<rect x="0" y="45" width="9" height="5" fill="#e4e4e4"/>
<rect x="2" y="46" width="7" height="4" fill="#f6f6f6"/>
</svg>
</body></html>
